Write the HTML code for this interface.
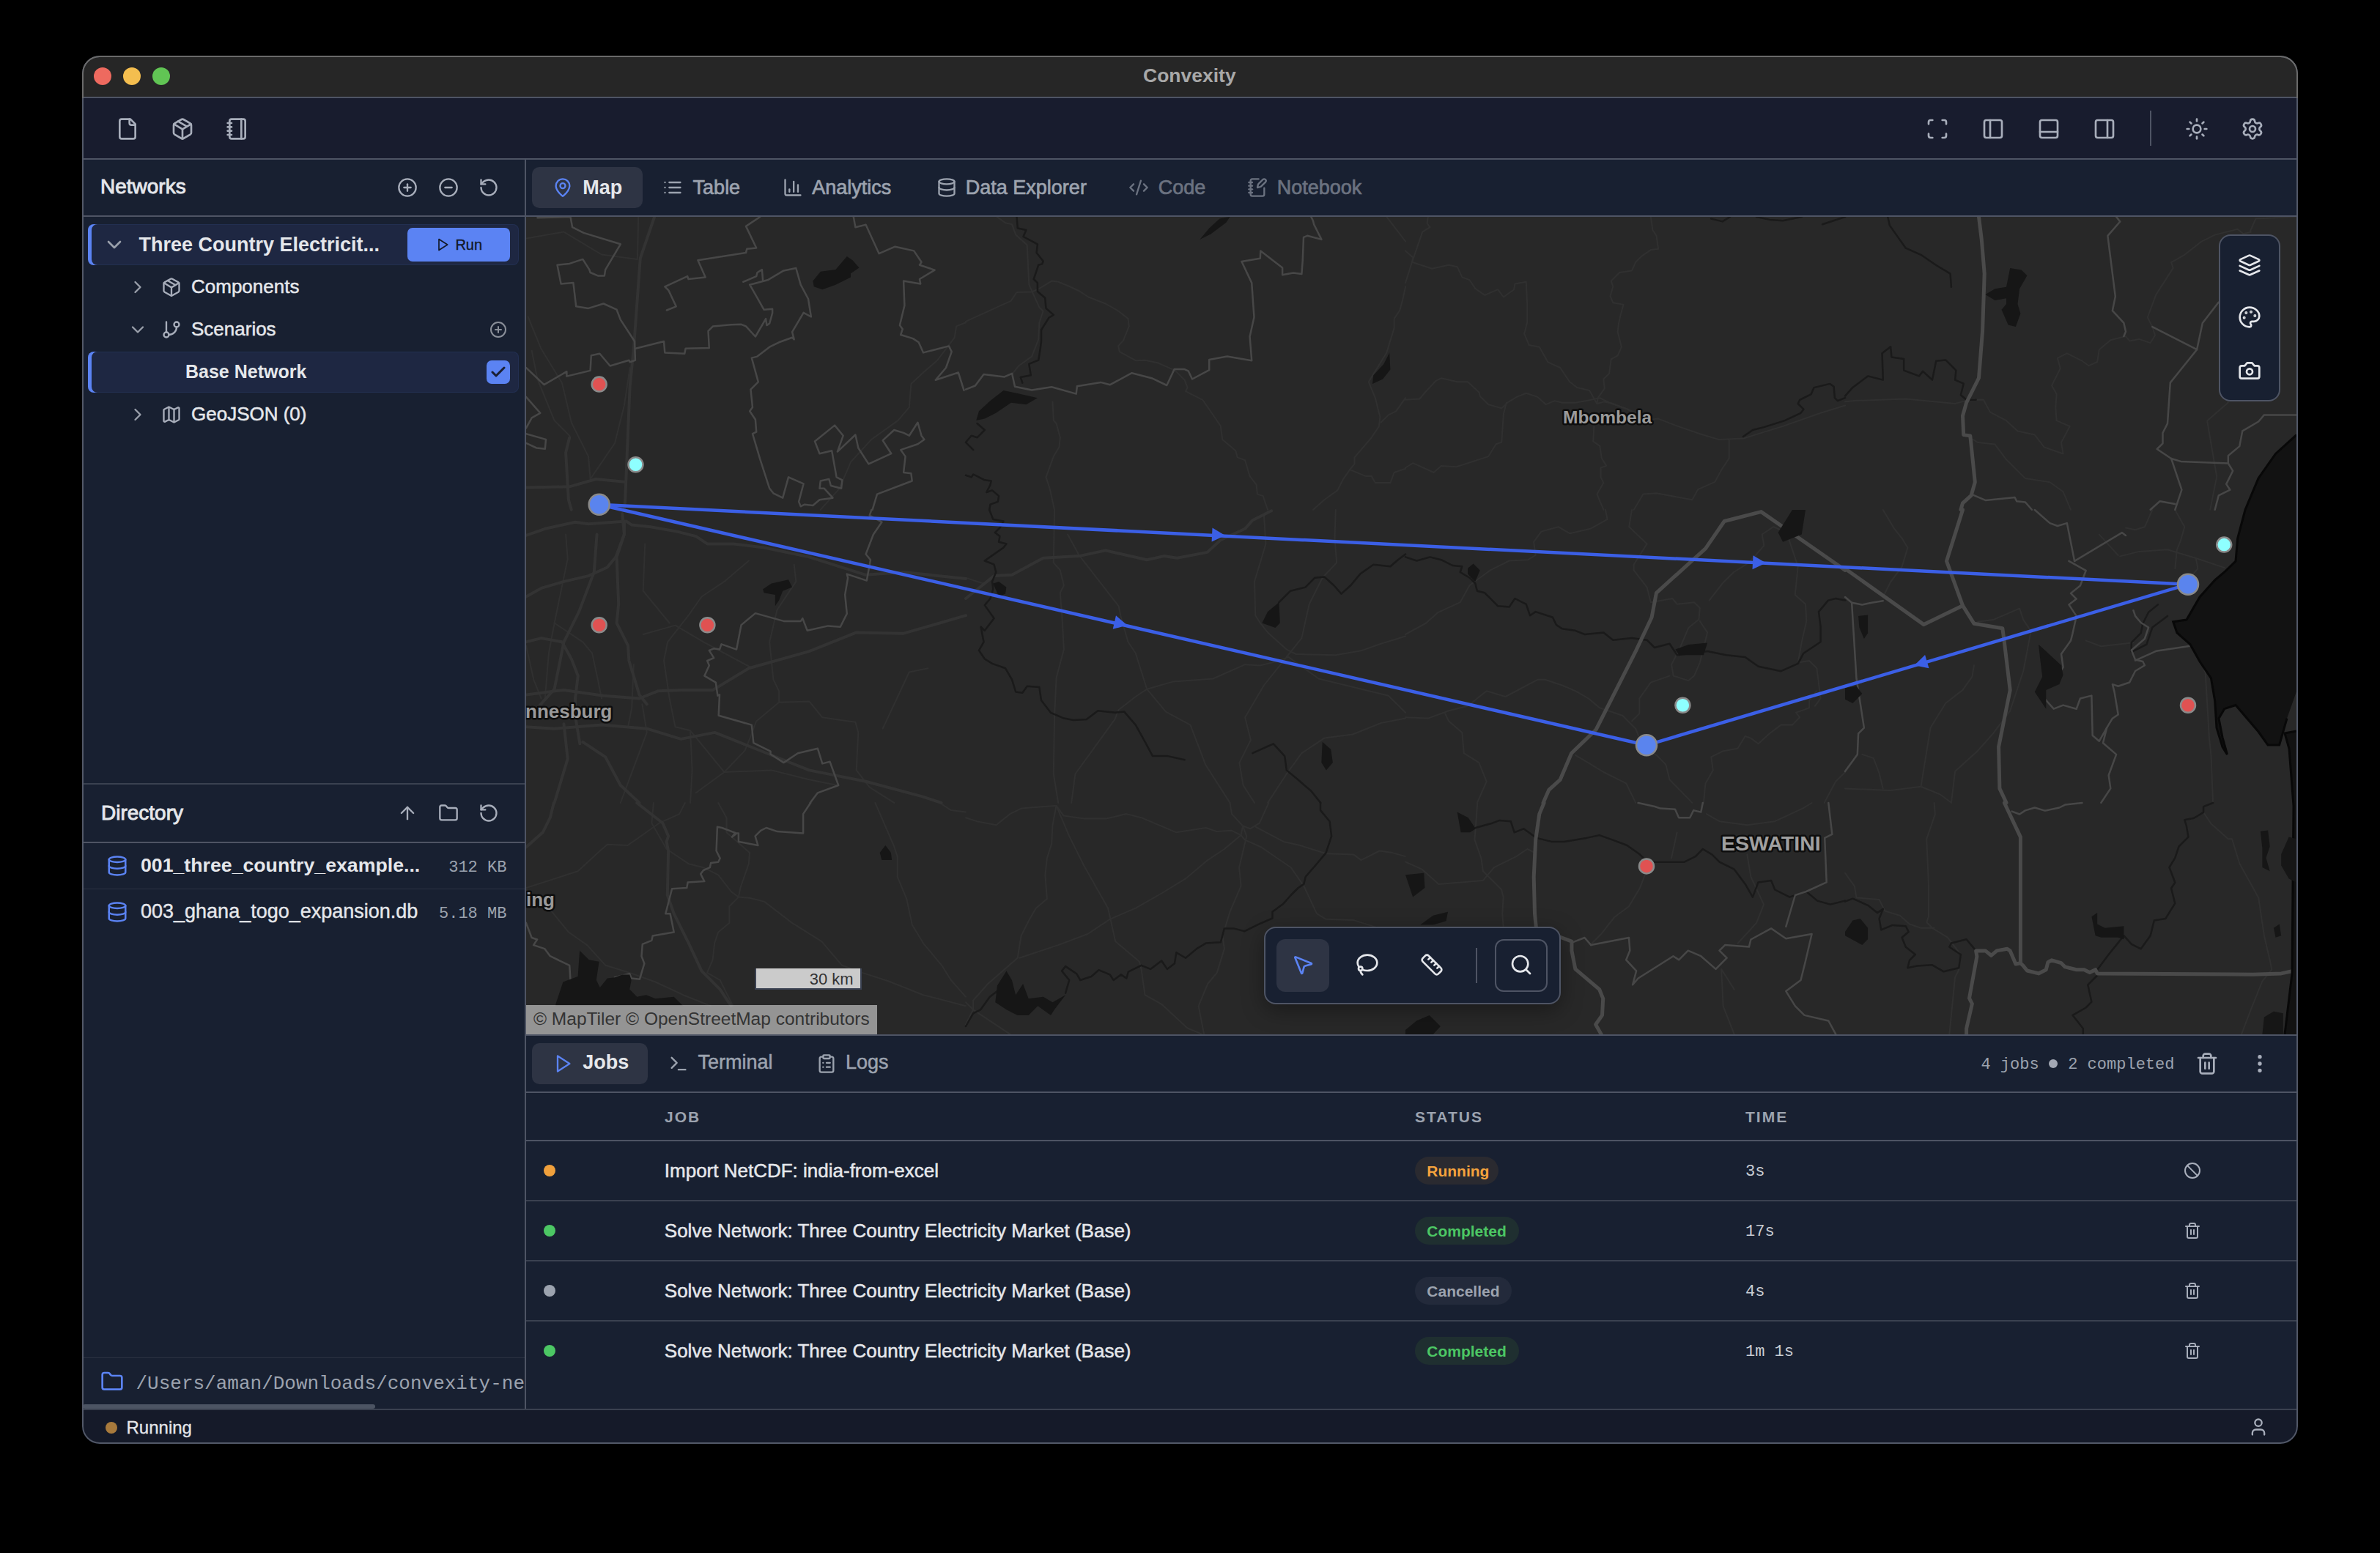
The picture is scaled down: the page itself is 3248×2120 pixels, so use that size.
<!DOCTYPE html>
<html><head><meta charset="utf-8"><style>
html,body{margin:0;padding:0;width:3248px;height:2120px;background:#000;overflow:hidden}
.a{position:absolute}
.t{position:absolute;white-space:pre}
</style></head><body>
<div class="a" style="left:112px;top:76px;width:3024px;height:1895px;border-radius:24px;background:#182031;overflow:hidden">
<div class="a" style="left:-112px;top:-76px;width:3248px;height:2120px">
<div class="a" style="left:112px;top:76px;width:3024px;height:56px;background:#262626;border-radius:0px;"></div>
<div class="a" style="left:112px;top:132px;width:3024px;height:2px;background:#4e5464;border-radius:0px;"></div>
<div class="a" style="left:128px;top:92px;width:24px;height:24px;border-radius:50%;background:#ee6a5f"></div>
<div class="a" style="left:168px;top:92px;width:24px;height:24px;border-radius:50%;background:#f4be4f"></div>
<div class="a" style="left:208px;top:92px;width:24px;height:24px;border-radius:50%;background:#61c554"></div>
<div class="t" style="left:1560.00px;top:90.16px;font-size:26.5px;line-height:26.5px;font-family:'Liberation Sans', sans-serif;font-weight:700;color:#a8a8a8;">Convexity</div>
<div class="a" style="left:112px;top:134px;width:3024px;height:82px;background:#181c2e;border-radius:0px;"></div>
<div class="a" style="left:112px;top:216px;width:3024px;height:2px;background:#4e5464;border-radius:0px;"></div>
<svg class="a" style="left:158.00px;top:160.00px;color:#a8aebb" width="32" height="32" viewBox="0 0 24 24" fill="none" stroke="currentColor" stroke-width="2" stroke-linecap="round" stroke-linejoin="round"><path d="M15 2H6a2 2 0 0 0-2 2v16a2 2 0 0 0 2 2h12a2 2 0 0 0 2-2V7Z"/><path d="M14 2v4a2 2 0 0 0 2 2h4"/></svg>
<svg class="a" style="left:233.00px;top:160.00px;color:#a8aebb" width="32" height="32" viewBox="0 0 24 24" fill="none" stroke="currentColor" stroke-width="2" stroke-linecap="round" stroke-linejoin="round"><path d="M11 21.73a2 2 0 0 0 2 0l7-4A2 2 0 0 0 21 16V8a2 2 0 0 0-1-1.73l-7-4a2 2 0 0 0-2 0l-7 4A2 2 0 0 0 3 8v8a2 2 0 0 0 1 1.73z"/><path d="M12 22V12"/><path d="m3.3 7 7.703 4.734a2 2 0 0 0 1.994 0L20.7 7"/><path d="m7.5 4.27 9 5.15"/></svg>
<svg class="a" style="left:308.00px;top:160.00px;color:#a8aebb" width="32" height="32" viewBox="0 0 24 24" fill="none" stroke="currentColor" stroke-width="2" stroke-linecap="round" stroke-linejoin="round"><path d="M2 6h4"/><path d="M2 10h4"/><path d="M2 14h4"/><path d="M2 18h4"/><rect width="16" height="20" x="4" y="2" rx="2"/><path d="M16 2v20"/></svg>
<svg class="a" style="left:2628.00px;top:160.00px;color:#a8aebb" width="32" height="32" viewBox="0 0 24 24" fill="none" stroke="currentColor" stroke-width="2" stroke-linecap="round" stroke-linejoin="round"><path d="M3 7V5a2 2 0 0 1 2-2h2"/><path d="M17 3h2a2 2 0 0 1 2 2v2"/><path d="M21 17v2a2 2 0 0 1-2 2h-2"/><path d="M7 21H5a2 2 0 0 1-2-2v-2"/></svg>
<svg class="a" style="left:2704.00px;top:160.00px;color:#a8aebb" width="32" height="32" viewBox="0 0 24 24" fill="none" stroke="currentColor" stroke-width="2" stroke-linecap="round" stroke-linejoin="round"><rect width="18" height="18" x="3" y="3" rx="2"/><path d="M9 3v18"/></svg>
<svg class="a" style="left:2780.00px;top:160.00px;color:#a8aebb" width="32" height="32" viewBox="0 0 24 24" fill="none" stroke="currentColor" stroke-width="2" stroke-linecap="round" stroke-linejoin="round"><rect width="18" height="18" x="3" y="3" rx="2"/><path d="M3 15h18"/></svg>
<svg class="a" style="left:2856.00px;top:160.00px;color:#a8aebb" width="32" height="32" viewBox="0 0 24 24" fill="none" stroke="currentColor" stroke-width="2" stroke-linecap="round" stroke-linejoin="round"><rect width="18" height="18" x="3" y="3" rx="2"/><path d="M15 3v18"/></svg>
<svg class="a" style="left:2981.50px;top:160.00px;color:#a8aebb" width="32" height="32" viewBox="0 0 24 24" fill="none" stroke="currentColor" stroke-width="2" stroke-linecap="round" stroke-linejoin="round"><circle cx="12" cy="12" r="4"/><path d="M12 2v2"/><path d="M12 20v2"/><path d="m4.93 4.93 1.41 1.41"/><path d="m17.66 17.66 1.41 1.41"/><path d="M2 12h2"/><path d="M20 12h2"/><path d="m6.34 17.66-1.41 1.41"/><path d="m19.07 4.93-1.41 1.41"/></svg>
<svg class="a" style="left:3058.00px;top:160.00px;color:#a8aebb" width="32" height="32" viewBox="0 0 24 24" fill="none" stroke="currentColor" stroke-width="2" stroke-linecap="round" stroke-linejoin="round"><path d="M9.671 4.136a2.34 2.34 0 0 1 4.659 0 2.34 2.34 0 0 0 3.319 1.915 2.34 2.34 0 0 1 2.33 4.033 2.34 2.34 0 0 0 0 3.831 2.34 2.34 0 0 1-2.33 4.033 2.34 2.34 0 0 0-3.319 1.915 2.34 2.34 0 0 1-4.659 0 2.34 2.34 0 0 0-3.32-1.915 2.34 2.34 0 0 1-2.33-4.033 2.34 2.34 0 0 0 0-3.831A2.34 2.34 0 0 1 6.35 6.051a2.34 2.34 0 0 0 3.319-1.915"/><circle cx="12" cy="12" r="3"/></svg>
<div class="a" style="left:2934px;top:151px;width:2px;height:48px;background:#4e5464;border-radius:0px;"></div>
<div class="a" style="left:112px;top:218px;width:604px;height:1706px;background:#182031;border-radius:0px;"></div>
<div class="a" style="left:716px;top:218px;width:2px;height:1706px;background:#4e5464;border-radius:0px;"></div>
<div class="t" style="left:137.00px;top:241.49px;font-size:28px;line-height:28px;font-family:'Liberation Sans', sans-serif;font-weight:400;color:#e5e7eb;-webkit-text-stroke:0.9px #e5e7eb;">Networks</div>
<div class="a" style="left:112px;top:294px;width:604px;height:2px;background:#4e5464;border-radius:0px;"></div>
<svg class="a" style="left:542.00px;top:242.00px;color:#a8aebb" width="28" height="28" viewBox="0 0 24 24" fill="none" stroke="currentColor" stroke-width="2" stroke-linecap="round" stroke-linejoin="round"><circle cx="12" cy="12" r="10"/><path d="M8 12h8"/><path d="M12 8v8"/></svg>
<svg class="a" style="left:597.70px;top:242.00px;color:#a8aebb" width="28" height="28" viewBox="0 0 24 24" fill="none" stroke="currentColor" stroke-width="2" stroke-linecap="round" stroke-linejoin="round"><circle cx="12" cy="12" r="10"/><path d="M8 12h8"/></svg>
<svg class="a" style="left:653.40px;top:242.00px;color:#a8aebb" width="28" height="28" viewBox="0 0 24 24" fill="none" stroke="currentColor" stroke-width="2" stroke-linecap="round" stroke-linejoin="round"><path d="M3 12a9 9 0 1 0 9-9 9.75 9.75 0 0 0-6.74 2.74L3 8"/><path d="M3 3v5h5"/></svg>
<div class="a" style="left:120px;top:306px;width:588px;height:56px;background:#1e2742;border-radius:8px;box-shadow:inset 5px 0 0 #5b83f3, inset 0 0 0 1px #222f50"></div>
<svg class="a" style="left:140.00px;top:318.00px;color:#9aa0ab" width="32" height="32" viewBox="0 0 24 24" fill="none" stroke="currentColor" stroke-width="2" stroke-linecap="round" stroke-linejoin="round"><path d="m6 9 6 6 6-6"/></svg>
<div class="t" style="left:189.40px;top:321.14px;font-size:27px;line-height:27px;font-family:'Liberation Sans', sans-serif;font-weight:700;color:#e5e7eb;">Three Country Electricit...</div>
<div class="a" style="left:556px;top:311px;width:140px;height:46px;background:#5b83f3;border-radius:7px;"></div>
<svg class="a" style="left:593.90px;top:324.00px;color:#111827" width="20" height="20" viewBox="0 0 24 24" fill="none" stroke="currentColor" stroke-width="2" stroke-linecap="round" stroke-linejoin="round"><polygon points="6 3 20 12 6 21 6 3"/></svg>
<div class="t" style="left:621.40px;top:324.27px;font-size:20px;line-height:20px;font-family:'Liberation Sans', sans-serif;font-weight:400;color:#111827;-webkit-text-stroke:0.3px #111827;">Run</div>
<svg class="a" style="left:174.00px;top:378.00px;color:#9aa0ab" width="28" height="28" viewBox="0 0 24 24" fill="none" stroke="currentColor" stroke-width="2" stroke-linecap="round" stroke-linejoin="round"><path d="m9 18 6-6-6-6"/></svg>
<svg class="a" style="left:220.00px;top:378.00px;color:#a8aebb" width="28" height="28" viewBox="0 0 24 24" fill="none" stroke="currentColor" stroke-width="2" stroke-linecap="round" stroke-linejoin="round"><path d="M11 21.73a2 2 0 0 0 2 0l7-4A2 2 0 0 0 21 16V8a2 2 0 0 0-1-1.73l-7-4a2 2 0 0 0-2 0l-7 4A2 2 0 0 0 3 8v8a2 2 0 0 0 1 1.73z"/><path d="M12 22V12"/><path d="m3.3 7 7.703 4.734a2 2 0 0 0 1.994 0L20.7 7"/><path d="m7.5 4.27 9 5.15"/></svg>
<div class="t" style="left:261.00px;top:378.49px;font-size:26px;line-height:26px;font-family:'Liberation Sans', sans-serif;font-weight:400;color:#e5e7eb;-webkit-text-stroke:0.5px #e5e7eb;">Components</div>
<svg class="a" style="left:173.60px;top:436.40px;color:#9aa0ab" width="28" height="28" viewBox="0 0 24 24" fill="none" stroke="currentColor" stroke-width="2" stroke-linecap="round" stroke-linejoin="round"><path d="m6 9 6 6 6-6"/></svg>
<svg class="a" style="left:220.00px;top:436.00px;color:#a8aebb" width="28" height="28" viewBox="0 0 24 24" fill="none" stroke="currentColor" stroke-width="2" stroke-linecap="round" stroke-linejoin="round"><line x1="6" x2="6" y1="3" y2="15"/><circle cx="18" cy="6" r="3"/><circle cx="6" cy="18" r="3"/><path d="M18 9a9 9 0 0 1-9 9"/></svg>
<div class="t" style="left:261.00px;top:436.19px;font-size:26px;line-height:26px;font-family:'Liberation Sans', sans-serif;font-weight:400;color:#e5e7eb;-webkit-text-stroke:0.5px #e5e7eb;">Scenarios</div>
<svg class="a" style="left:668.00px;top:438.00px;color:#8a8f99" width="24" height="24" viewBox="0 0 24 24" fill="none" stroke="currentColor" stroke-width="2" stroke-linecap="round" stroke-linejoin="round"><circle cx="12" cy="12" r="10"/><path d="M8 12h8"/><path d="M12 8v8"/></svg>
<div class="a" style="left:120px;top:480px;width:588px;height:56px;background:#1e2742;border-radius:8px;box-shadow:inset 5px 0 0 #5b83f3, inset 0 0 0 1px #222f50"></div>
<div class="t" style="left:253.00px;top:495.23px;font-size:25px;line-height:25px;font-family:'Liberation Sans', sans-serif;font-weight:700;color:#e5e7eb;">Base Network</div>
<div class="a" style="left:664px;top:492px;width:32px;height:32px;background:#5b83f3;border-radius:7px;"></div>
<svg class="a" style="left:668.00px;top:496.00px;color:#1a1f33" width="24" height="24" viewBox="0 0 24 24" fill="none" stroke="currentColor" stroke-width="3" stroke-linecap="round" stroke-linejoin="round"><path d="M20 6 9 17l-5-5"/></svg>
<svg class="a" style="left:174.00px;top:552.30px;color:#9aa0ab" width="28" height="28" viewBox="0 0 24 24" fill="none" stroke="currentColor" stroke-width="2" stroke-linecap="round" stroke-linejoin="round"><path d="m9 18 6-6-6-6"/></svg>
<svg class="a" style="left:220.00px;top:552.00px;color:#a8aebb" width="28" height="28" viewBox="0 0 24 24" fill="none" stroke="currentColor" stroke-width="2" stroke-linecap="round" stroke-linejoin="round"><path d="M14.106 5.553a2 2 0 0 0 1.788 0l3.659-1.83A1 1 0 0 1 21 4.619v12.764a1 1 0 0 1-.553.894l-4.553 2.277a2 2 0 0 1-1.788 0l-4.212-2.106a2 2 0 0 0-1.788 0l-3.659 1.83A1 1 0 0 1 3 19.381V6.618a1 1 0 0 1 .553-.894l4.553-2.277a2 2 0 0 1 1.788 0z"/><path d="M15 5.764v15"/><path d="M9 3.236v15"/></svg>
<div class="t" style="left:261.00px;top:552.49px;font-size:26px;line-height:26px;font-family:'Liberation Sans', sans-serif;font-weight:400;color:#e5e7eb;-webkit-text-stroke:0.5px #e5e7eb;">GeoJSON (0)</div>
<div class="a" style="left:112px;top:1069px;width:604px;height:2px;background:#3a4150;border-radius:0px;"></div>
<div class="t" style="left:138.00px;top:1096.09px;font-size:28px;line-height:28px;font-family:'Liberation Sans', sans-serif;font-weight:400;color:#e5e7eb;-webkit-text-stroke:0.9px #e5e7eb;">Directory</div>
<svg class="a" style="left:542.00px;top:1096.00px;color:#a8aebb" width="28" height="28" viewBox="0 0 24 24" fill="none" stroke="currentColor" stroke-width="2" stroke-linecap="round" stroke-linejoin="round"><path d="m5 12 7-7 7 7"/><path d="M12 19V5"/></svg>
<svg class="a" style="left:597.70px;top:1096.00px;color:#a8aebb" width="28" height="28" viewBox="0 0 24 24" fill="none" stroke="currentColor" stroke-width="2" stroke-linecap="round" stroke-linejoin="round"><path d="M20 20a2 2 0 0 0 2-2V8a2 2 0 0 0-2-2h-7.9a2 2 0 0 1-1.69-.9L9.6 3.9A2 2 0 0 0 7.93 3H4a2 2 0 0 0-2 2v13a2 2 0 0 0 2 2Z"/></svg>
<svg class="a" style="left:653.00px;top:1096.00px;color:#a8aebb" width="28" height="28" viewBox="0 0 24 24" fill="none" stroke="currentColor" stroke-width="2" stroke-linecap="round" stroke-linejoin="round"><path d="M3 12a9 9 0 1 0 9-9 9.75 9.75 0 0 0-6.74 2.74L3 8"/><path d="M3 3v5h5"/></svg>
<div class="a" style="left:112px;top:1149px;width:604px;height:2px;background:#4e5464;border-radius:0px;"></div>
<svg class="a" style="left:145.00px;top:1167.00px;color:#5b83f3" width="30" height="30" viewBox="0 0 24 24" fill="none" stroke="currentColor" stroke-width="2" stroke-linecap="round" stroke-linejoin="round"><ellipse cx="12" cy="5" rx="9" ry="3"/><path d="M3 5V19A9 3 0 0 0 21 19V5"/><path d="M3 12A9 3 0 0 0 21 12"/></svg>
<div class="t" style="left:192.00px;top:1168.09px;font-size:26.7px;line-height:26.7px;font-family:'Liberation Sans', sans-serif;font-weight:700;color:#e5e7eb;">001_three_country_example...</div>
<div class="t" style="right:2556.60px;top:1173.85px;font-size:22px;line-height:22px;font-family:'Liberation Mono', monospace;font-weight:400;color:#9ca3af;">312 KB</div>
<div class="a" style="left:112px;top:1213px;width:604px;height:1px;background:#2b3242;border-radius:0px;"></div>
<svg class="a" style="left:145.00px;top:1230.40px;color:#5b83f3" width="30" height="30" viewBox="0 0 24 24" fill="none" stroke="currentColor" stroke-width="2" stroke-linecap="round" stroke-linejoin="round"><ellipse cx="12" cy="5" rx="9" ry="3"/><path d="M3 5V19A9 3 0 0 0 21 19V5"/><path d="M3 12A9 3 0 0 0 21 12"/></svg>
<div class="t" style="left:192.00px;top:1230.84px;font-size:27px;line-height:27px;font-family:'Liberation Sans', sans-serif;font-weight:400;color:#e5e7eb;-webkit-text-stroke:0.4px #e5e7eb;">003_ghana_togo_expansion.db</div>
<div class="t" style="right:2556.60px;top:1236.85px;font-size:22px;line-height:22px;font-family:'Liberation Mono', monospace;font-weight:400;color:#9ca3af;">5.18 MB</div>
<div class="a" style="left:112px;top:1853px;width:604px;height:1px;background:#2b3242;border-radius:0px;"></div>
<svg class="a" style="left:137.00px;top:1870.00px;color:#5b83f3" width="32" height="32" viewBox="0 0 24 24" fill="none" stroke="currentColor" stroke-width="2" stroke-linecap="round" stroke-linejoin="round"><path d="M20 20a2 2 0 0 0 2-2V8a2 2 0 0 0-2-2h-7.9a2 2 0 0 1-1.69-.9L9.6 3.9A2 2 0 0 0 7.93 3H4a2 2 0 0 0-2 2v13a2 2 0 0 0 2 2Z"/></svg>
<div class="a" style="left:112px;top:1854px;width:604px;height:63px;overflow:hidden">
<div class="t" style="left:73.50px;top:21.58px;font-size:26px;line-height:26px;font-family:'Liberation Mono', monospace;font-weight:400;color:#9ca3af;">/Users/aman/Downloads/convexity-networks</div>
</div>
<div class="a" style="left:113px;top:1917px;width:399px;height:6px;background:#4c5463;border-radius:3px;"></div>
<div class="a" style="left:112px;top:1923px;width:3024px;height:2px;background:#3a4150;border-radius:0px;"></div>
<div class="a" style="left:112px;top:1925px;width:3024px;height:46px;background:#151a29;border-radius:0px;"></div>
<div class="a" style="left:143.7px;top:1941px;width:16px;height:16px;border-radius:50%;background:#a87a3c"></div>
<div class="t" style="left:172.50px;top:1936.68px;font-size:24px;line-height:24px;font-family:'Liberation Sans', sans-serif;font-weight:400;color:#e5e7eb;-webkit-text-stroke:0.3px #e5e7eb;">Running</div>
<svg class="a" style="left:3068.00px;top:1934.00px;color:#a8aebb" width="28" height="28" viewBox="0 0 24 24" fill="none" stroke="currentColor" stroke-width="2" stroke-linecap="round" stroke-linejoin="round"><path d="M19 21v-2a4 4 0 0 0-4-4H9a4 4 0 0 0-4 4v2"/><circle cx="12" cy="7" r="4"/></svg>
<div class="a" style="left:718px;top:218px;width:2416px;height:76px;background:#182031;border-radius:0px;"></div>
<div class="a" style="left:718px;top:294px;width:2416px;height:2px;background:#4e5464;border-radius:0px;"></div>
<div class="a" style="left:726px;top:228px;width:151px;height:56px;background:#2e3444;border-radius:10px;"></div>
<svg class="a" style="left:754.00px;top:241.50px;color:#5b83f3" width="28" height="28" viewBox="0 0 24 24" fill="none" stroke="currentColor" stroke-width="2" stroke-linecap="round" stroke-linejoin="round"><path d="M20 10c0 4.993-5.539 10.193-7.399 11.799a1 1 0 0 1-1.202 0C9.539 20.193 4 14.993 4 10a8 8 0 0 1 16 0"/><circle cx="12" cy="10" r="3"/></svg>
<div class="t" style="left:795.20px;top:242.54px;font-size:27px;line-height:27px;font-family:'Liberation Sans', sans-serif;font-weight:700;color:#e5e7eb;">Map</div>
<svg class="a" style="left:904.00px;top:241.50px;color:#9ca3af" width="28" height="28" viewBox="0 0 24 24" fill="none" stroke="currentColor" stroke-width="2" stroke-linecap="round" stroke-linejoin="round"><path d="M3 12h.01"/><path d="M3 18h.01"/><path d="M3 6h.01"/><path d="M8 12h13"/><path d="M8 18h13"/><path d="M8 6h13"/></svg>
<div class="t" style="left:945.60px;top:242.54px;font-size:27px;line-height:27px;font-family:'Liberation Sans', sans-serif;font-weight:400;color:#9ca3af;-webkit-text-stroke:0.7px #9ca3af;">Table</div>
<svg class="a" style="left:1068.00px;top:241.50px;color:#9ca3af" width="28" height="28" viewBox="0 0 24 24" fill="none" stroke="currentColor" stroke-width="2" stroke-linecap="round" stroke-linejoin="round"><path d="M3 3v16a2 2 0 0 0 2 2h16"/><path d="M18 17V9"/><path d="M13 17V5"/><path d="M8 17v-3"/></svg>
<div class="t" style="left:1108.20px;top:242.54px;font-size:27px;line-height:27px;font-family:'Liberation Sans', sans-serif;font-weight:400;color:#9ca3af;-webkit-text-stroke:0.7px #9ca3af;">Analytics</div>
<svg class="a" style="left:1278.00px;top:241.50px;color:#9ca3af" width="28" height="28" viewBox="0 0 24 24" fill="none" stroke="currentColor" stroke-width="2" stroke-linecap="round" stroke-linejoin="round"><ellipse cx="12" cy="5" rx="9" ry="3"/><path d="M3 5V19A9 3 0 0 0 21 19V5"/><path d="M3 12A9 3 0 0 0 21 12"/></svg>
<div class="t" style="left:1317.80px;top:242.54px;font-size:27px;line-height:27px;font-family:'Liberation Sans', sans-serif;font-weight:400;color:#9ca3af;-webkit-text-stroke:0.7px #9ca3af;">Data Explorer</div>
<svg class="a" style="left:1540.00px;top:241.50px;color:#6b7280" width="28" height="28" viewBox="0 0 24 24" fill="none" stroke="currentColor" stroke-width="2" stroke-linecap="round" stroke-linejoin="round"><path d="m18 16 4-4-4-4"/><path d="m6 8-4 4 4 4"/><path d="m14.5 4-5 16"/></svg>
<div class="t" style="left:1580.80px;top:242.54px;font-size:27px;line-height:27px;font-family:'Liberation Sans', sans-serif;font-weight:400;color:#6b7280;-webkit-text-stroke:0.7px #6b7280;">Code</div>
<svg class="a" style="left:1702.00px;top:241.50px;color:#6b7280" width="28" height="28" viewBox="0 0 24 24" fill="none" stroke="currentColor" stroke-width="2" stroke-linecap="round" stroke-linejoin="round"><path d="M13.4 2H6a2 2 0 0 0-2 2v16a2 2 0 0 0 2 2h12a2 2 0 0 0 2-2v-7.4"/><path d="M2 6h4"/><path d="M2 10h4"/><path d="M2 14h4"/><path d="M2 18h4"/><path d="M21.378 5.626a1 1 0 1 0-3.004-3.004l-5.01 5.012a2 2 0 0 0-.506.854l-.837 2.87a.5.5 0 0 0 .62.62l2.87-.837a2 2 0 0 0 .854-.506z"/></svg>
<div class="t" style="left:1742.70px;top:242.54px;font-size:27px;line-height:27px;font-family:'Liberation Sans', sans-serif;font-weight:400;color:#6b7280;-webkit-text-stroke:0.7px #6b7280;">Notebook</div>
<svg class="a" style="left:718px;top:296px" width="2416" height="1116" viewBox="718 296 2416 1116">
<rect x="718" y="296" width="2416" height="1116" fill="#282828"/>
<g fill="none" stroke-linejoin="round" stroke-linecap="round">
<polyline points="871.2,296.0 869.9,352.7" stroke="#303030" stroke-width="2"/>
<polyline points="718.0,325.6 769.5,316.6 821.0,347.5 869.9,353.9" stroke="#303030" stroke-width="2"/>
<polyline points="1318.1,440.2 1305.2,445.4 1302.6,460.8 1279.4,491.7 1261.4,507.2 1243.4,523.9 1240.8,556.1 1225.3,574.1 1189.3,599.9 1161.0,630.8 1145.5,666.8 1119.8,695.9" stroke="#303030" stroke-width="2"/>
<polyline points="720.6,432.5 738.6,476.3 766.9,522.6 779.8,576.7 803.0,623.1 805.6,654.0" stroke="#303030" stroke-width="2"/>
<polyline points="725.7,478.8 733.5,517.5 756.6,574.1 777.2,594.7" stroke="#303030" stroke-width="2"/>
<polyline points="805.6,654.0 839.0,605.0 851.9,553.5 859.6,502.0" stroke="#303030" stroke-width="2"/>
<polyline points="1360.5,296.0 1372.1,304.2 1381.1,306.3 1386.2,320.5 1401.7,334.6 1404.3,388.7 1418.4,419.6 1423.6,424.8 1418.4,440.2 1417.2,463.4 1408.1,486.6 1390.1,499.5 1381.1,511.0" stroke="#303030" stroke-width="2"/>
<polyline points="1318.0,438.9 1379.8,410.6 1387.5,399.0 1408.1,398.5 1418.4,393.9 1435.2,383.6 1444.2,384.8 1457.1,390.0 1472.5,397.0 1485.4,405.5 1508.6,414.5 1526.6,424.8 1539.5,435.1 1540.8,445.4 1533.0,464.7 1526.1,472.4 1527.9,480.1 1549.8,492.2 1562.7,491.7 1580.7,495.6 1603.9,505.9 1616.7,518.8 1620.6,529.1 1618.0,534.2 1641.2,545.8 1665.7,581.3 1668.2,599.9 1686.3,615.3 1688.8,624.4 1699.1,628.2 1705.6,650.1 1714.6,661.7 1715.9,674.6 1723.6,677.1 1730.1,695.9" stroke="#303030" stroke-width="2"/>
<polyline points="1436.5,548.4 1437.8,574.1 1441.6,578.0 1446.8,597.3 1445.5,610.2 1437.8,623.1 1427.5,651.4 1432.6,666.8 1439.0,695.9" stroke="#303030" stroke-width="2"/>
<polyline points="1892.3,296.0 1918.1,329.5" stroke="#303030" stroke-width="2"/>
<polyline points="1918.1,391.3 1914.2,409.3 1910.3,423.5 1902.6,435.1 1902.6,447.9 1892.3,481.4 1867.8,521.3 1876.8,543.2 1883.3,569.0 1882.0,581.9 1871.7,597.3 1848.5,624.4 1848.5,633.4 1842.1,641.1 1833.1,654.0 1825.3,669.4 1807.3,682.3 1791.9,695.9" stroke="#303030" stroke-width="2"/>
<polyline points="1842.1,641.1 1864.0,650.1 1871.7,650.1 1876.8,659.1 1897.4,659.1 1902.6,645.0 1918.1,639.8" stroke="#303030" stroke-width="2"/>
<polyline points="1884.6,576.7 1894.9,566.4 1905.2,561.3 1918.1,543.2" stroke="#303030" stroke-width="2"/>
<polyline points="1918.0,342.4 1928.3,351.4 1927.0,357.8 1954.1,366.8 1977.2,361.7 1988.8,364.2 1995.3,378.4 2005.6,382.3 2013.3,393.9 2026.2,402.9 2044.2,395.2 2051.9,405.5 2066.1,395.2 2067.4,387.4 2082.8,384.8 2084.1,414.5 2084.1,440.2 2080.2,455.7 2086.7,471.1 2100.8,473.7 2112.4,494.3 2129.2,502.0 2142.1,521.3 2152.4,529.1 2169.1,532.9 2179.4,551.0 2189.7,548.4 2201.3,551.0 2227.0,561.3 2252.8,572.8 2263.1,571.6 2286.3,580.6 2319.8,592.2 2345.5,599.9 2379.0,598.6 2433.1,581.9 2484.6,563.8 2518.1,553.5" stroke="#303030" stroke-width="2"/>
<polyline points="1948.9,296.0 1947.6,305.0 1951.5,310.2 1941.2,316.6 1927.0,357.8 1918.0,386.1" stroke="#303030" stroke-width="2"/>
<polyline points="2252.8,296.0 2255.4,314.0 2260.5,321.8 2263.1,339.8 2252.8,341.1 2239.9,350.1 2232.2,357.8 2227.0,369.4 2210.3,372.0 2198.7,383.6 2201.3,391.3 2197.4,404.2 2201.3,413.2 2215.5,415.8 2211.6,429.9 2209.0,441.5 2207.7,453.1 2212.9,473.7 2207.7,485.3 2198.7,490.4 2196.1,509.8 2188.4,517.5 2189.7,530.4 2180.7,543.2 2179.4,551.0" stroke="#303030" stroke-width="2"/>
<polyline points="1918.0,545.8 1937.3,544.5 1943.8,536.8 1959.2,520.1 1966.9,516.2 1988.8,521.3 2003.0,521.3 2018.4,535.5 2019.7,540.7 2031.3,552.2 2049.3,557.4 2054.5,552.2 2057.1,549.7 2069.9,541.9 2082.8,536.8 2098.3,541.9 2109.9,552.2 2121.5,547.1 2131.8,549.7 2149.8,549.7 2165.2,547.1 2183.3,543.2 2196.1,549.7 2221.9,558.7 2227.0,562.5" stroke="#303030" stroke-width="2"/>
<polyline points="2055.8,549.7 2051.9,565.1 2049.3,603.8 2041.6,606.3 2031.3,623.1 1987.5,637.2 1966.9,635.9 1956.6,645.0 1928.3,632.1 1918.0,638.5" stroke="#303030" stroke-width="2"/>
<polyline points="2175.5,579.3 2174.2,602.5 2183.3,608.9 2185.8,625.6 2192.3,635.9 2184.5,638.5 2184.5,651.4 2188.4,659.1 2179.4,674.6 2188.4,695.9" stroke="#303030" stroke-width="2"/>
<polyline points="2359.7,599.9 2359.7,625.6 2349.4,641.1 2340.4,657.8 2317.2,668.1 2309.4,682.3 2260.5,673.3 2242.5,674.6 2229.6,695.9" stroke="#303030" stroke-width="2"/>
<polyline points="2518.0,548.3 2530.9,547.0 2600.8,544.4 2668.1,550.9 2694.0,544.4" stroke="#303030" stroke-width="2"/>
<polyline points="2696.6,545.7 2706.9,545.7 2716.0,562.6 2738.0,574.2 2753.5,588.4 2776.8,593.6 2789.7,610.4 2815.6,619.5 2813.0,604.0 2824.7,582.0 2806.6,574.2 2805.3,556.1 2806.6,538.0 2800.1,526.3 2811.7,503.0 2807.9,488.8 2820.8,482.3 2841.5,492.7 2850.6,499.2 2862.2,494.0 2864.8,477.2 2880.3,464.2 2901.0,459.0 2906.2,465.5 2919.1,462.9 2934.7,468.1 2941.1,457.7 2937.3,446.1 2930.8,433.2 2942.4,402.1 2965.7,365.9 2963.1,358.1 2981.3,347.8 3004.5,329.6 3022.7,320.6 3053.7,312.8 3061.5,319.3 3071.8,316.7" stroke="#303030" stroke-width="2"/>
<polyline points="3070.5,316.7 3078.3,298.6 3133.9,296.0" stroke="#303030" stroke-width="2"/>
<polyline points="3012.3,575.5 3025.2,650.6 3016.2,695.8" stroke="#303030" stroke-width="2"/>
<polyline points="3012.3,574.2 3040.8,549.6" stroke="#303030" stroke-width="2"/>
<polyline points="2686.2,596.2 2699.2,604.0 2722.5,606.6 2738.0,627.3 2763.9,653.1 2797.5,658.3 2815.6,671.3 2826.0,695.8" stroke="#303030" stroke-width="2"/>
<polyline points="1083.7,770.7 1086.3,793.9 1060.5,832.5 1050.2,876.3 1055.4,927.8 1063.1,943.2 1063.1,958.7 1032.2,984.4 1024.5,1005.0 1016.7,1024.4 988.4,1054.0 949.8,1082.3" stroke="#303030" stroke-width="2"/>
<polyline points="1266.5,912.3 1240.8,917.5 1204.7,994.7" stroke="#303030" stroke-width="2"/>
<polyline points="718.0,881.4 728.3,927.8 738.6,953.5" stroke="#303030" stroke-width="2"/>
<polyline points="1021.9,765.5 988.4,793.9 957.5,814.5 939.5,840.2 911.1,876.3 906.0,902.0 913.7,953.5 921.5,992.2 942.1,997.3 944.6,1051.4 942.1,1095.9" stroke="#303030" stroke-width="2"/>
<polyline points="846.8,1095.9 882.8,999.9 876.4,961.3" stroke="#303030" stroke-width="2"/>
<polyline points="1063.1,958.7 1104.3,957.4 1122.3,979.3 1140.4,981.9 1167.4,985.7 1171.3,999.9 1168.7,1051.4 1186.7,1074.6 1220.2,1095.9" stroke="#303030" stroke-width="2"/>
<polyline points="877.7,866.0 921.5,853.6 960.1,876.3 1024.5,911.0" stroke="#303030" stroke-width="2"/>
<polyline points="942.1,997.3 988.4,1054.0 1052.8,1051.4 1104.3,1064.3 1142.9,1072.0" stroke="#303030" stroke-width="2"/>
<polyline points="756.6,850.5 795.3,876.3 808.1,891.7 815.9,927.8 821.0,953.5" stroke="#303030" stroke-width="2"/>
<polyline points="772.1,729.5 774.7,763.0 756.6,850.5 748.9,891.7 743.8,953.5" stroke="#303030" stroke-width="2"/>
<polyline points="880.2,742.4 877.7,806.7 913.7,850.5" stroke="#303030" stroke-width="2"/>
<polyline points="864.8,907.2 862.2,966.4 857.1,992.2" stroke="#303030" stroke-width="2"/>
<polyline points="1439.0,696.0 1437.8,768.1 1446.8,778.4 1451.9,799.0 1446.8,809.3 1449.3,840.2 1451.9,886.6 1441.6,925.2 1439.0,979.3 1437.8,1056.5 1444.2,1095.9" stroke="#303030" stroke-width="2"/>
<polyline points="1457.1,729.5 1472.5,757.8 1526.6,827.3 1529.2,840.2 1539.5,876.3 1549.8,891.7 1565.2,940.7 1591.0,971.6 1624.5,989.6 1645.1,1043.7 1678.5,1095.9" stroke="#303030" stroke-width="2"/>
<polyline points="1318.0,788.7 1341.2,796.4 1356.6,788.7" stroke="#303030" stroke-width="2"/>
<polyline points="1462.2,1095.9 1467.4,1056.5 1521.5,981.9 1526.6,969.0 1549.8,951.0 1565.2,940.7 1601.3,930.4 1655.4,926.5 1699.1,907.2 1719.8,908.5 1745.5,902.0 1758.4,896.9 1799.6,926.5 1894.9,949.7 1918.1,972.8" stroke="#303030" stroke-width="2"/>
<polyline points="1724.9,703.7 1727.5,742.4 1712.0,793.9 1713.3,840.2 1719.8,850.5 1730.1,863.4 1755.8,886.6 1768.7,893.0 1822.8,894.3 1858.8,887.9 1884.6,878.8 1918.1,868.5" stroke="#303030" stroke-width="2"/>
<polyline points="1822.8,696.0 1821.5,734.6 1824.1,768.1 1804.7,788.7 1786.7,824.8 1776.4,871.1 1755.8,896.9 1724.9,935.5 1699.1,979.3 1706.9,1010.2 1691.4,1041.1 1696.6,1072.0 1712.0,1095.9" stroke="#303030" stroke-width="2"/>
<polyline points="1730.1,1095.9 1755.8,1056.5 1776.4,1028.2 1807.3,1007.6 1845.9,1002.5 1884.6,987.0 1918.1,980.6" stroke="#303030" stroke-width="2"/>
<polyline points="2191.0,696.0 2193.6,708.9 2170.4,721.8 2142.1,728.2 2126.6,719.2 2103.4,725.6 2093.1,739.8 2095.7,757.8 2085.4,764.2 2059.6,765.5 2033.9,778.4 2005.6,799.0 1992.7,822.2 1961.8,836.4 1946.3,850.5 1918.0,866.0" stroke="#303030" stroke-width="2"/>
<polyline points="2227.0,696.0 2223.2,719.2 2247.6,742.4 2229.6,770.7 2229.6,778.4 2247.6,801.6 2252.8,822.2 2282.4,817.0 2288.8,824.8 2312.0,822.2 2319.8,829.9 2318.5,845.4 2304.3,857.0 2294.0,881.4 2281.1,907.2 2283.7,922.6 2304.3,929.1 2312.0,922.6 2319.8,904.6 2330.1,863.4 2319.8,847.9" stroke="#303030" stroke-width="2"/>
<polyline points="2332.6,819.6 2350.7,796.4 2366.1,781.0 2386.7,768.1 2407.3,744.9 2404.7,729.5 2420.2,719.2 2438.2,726.9 2453.7,773.3 2449.8,811.9 2464.0,824.8 2465.3,847.9 2458.8,876.3 2453.7,904.6 2469.1,902.0 2479.4,912.3 2484.6,953.5 2476.8,963.8" stroke="#303030" stroke-width="2"/>
<polyline points="1918.0,979.3 1948.9,980.6 1977.2,970.3 2003.0,963.8 2028.7,943.2 2054.5,951.0 2098.3,927.8 2108.6,927.8 2131.8,935.5 2149.8,943.2 2167.8,953.5 2183.3,966.4 2214.2,976.7 2232.2,994.7 2242.5,1020.5 2260.5,1030.8 2273.4,1043.7 2278.5,1064.3 2309.4,1095.9" stroke="#303030" stroke-width="2"/>
<polyline points="2227.0,984.4 2237.3,974.1 2237.3,953.5 2252.8,931.6 2278.5,922.6" stroke="#303030" stroke-width="2"/>
<polyline points="2149.8,1030.8 2165.2,1039.8 2188.4,1054.0 2219.3,1069.4 2232.2,1095.9" stroke="#303030" stroke-width="2"/>
<polyline points="2479.4,943.2 2469.1,956.1 2469.1,966.4 2451.1,972.8 2456.2,979.3 2445.9,989.6 2430.5,989.6 2415.0,1001.2 2399.6,1015.3 2389.3,1007.6 2381.6,1005.0 2371.3,1021.8 2350.7,1025.6 2335.2,1033.4 2337.8,1051.4 2327.5,1069.4 2324.9,1095.9" stroke="#303030" stroke-width="2"/>
<polyline points="1972.1,974.1 1977.2,984.4 1995.3,999.9 1997.8,1028.2 2018.4,1041.1 2028.7,1066.8 2015.9,1095.9" stroke="#303030" stroke-width="2"/>
<polyline points="2518.1,1054.0 2505.2,1066.8 2489.7,1095.9" stroke="#303030" stroke-width="2"/>
<polyline points="2901.0,720.6 2914.0,723.2 2926.9,719.3 2937.3,696.0" stroke="#303030" stroke-width="2"/>
<polyline points="2968.3,696.0 2981.3,719.3 2976.1,737.4 2970.9,750.3 2968.3,776.2" stroke="#303030" stroke-width="2"/>
<polyline points="2893.3,759.4 2919.1,752.9 2958.0,750.3 2996.8,762.0 3035.6,774.9" stroke="#303030" stroke-width="2"/>
<polyline points="2996.8,762.0 2999.4,776.2 2991.6,785.3" stroke="#303030" stroke-width="2"/>
<polyline points="2996.8,882.3 3009.7,918.6 3014.9,1006.6 3017.5,1032.4 3020.1,1095.8" stroke="#303030" stroke-width="2"/>
<polyline points="2864.8,729.6 2890.7,758.1" stroke="#303030" stroke-width="2"/>
<polyline points="2518.0,1076.4 2580.1,1079.0 2621.5,1073.8 2647.4,1084.2 2662.9,1095.8" stroke="#303030" stroke-width="2"/>
<polyline points="2621.5,1073.8 2634.5,993.6 2655.2,960.0 2678.5,941.9 2691.4,923.7 2694.0,908.2" stroke="#303030" stroke-width="2"/>
<polyline points="2662.9,1095.8 2668.1,1053.1 2699.2,1024.7 2719.9,1001.4 2743.2,970.3 2761.3,916.0 2771.6,861.6 2761.3,846.1 2756.1,830.6 2738.0,838.3 2719.9,846.1 2699.2,848.7" stroke="#303030" stroke-width="2"/>
<polyline points="2569.8,1076.4 2564.6,1055.7 2556.8,1035.0 2541.3,1029.9" stroke="#303030" stroke-width="2"/>
<polyline points="2911.4,877.2 2867.4,882.3 2846.7,874.6" stroke="#303030" stroke-width="2"/>
<polyline points="2569.8,696.0 2585.3,721.9 2595.6,734.8 2603.4,747.8 2595.6,773.6 2580.1,794.3 2569.8,815.0" stroke="#303030" stroke-width="2"/>
<polyline points="718.0,1212.0 788.6,1189.3 818.8,1161.5 828.9,1152.7 856.6,1154.0 899.5,1123.7 927.2,1111.1 934.8,1096.0" stroke="#303030" stroke-width="2"/>
<polyline points="891.9,1096.0 889.4,1123.7 909.6,1159.0 939.8,1179.2 960.0,1184.2 980.2,1194.3 997.8,1217.0 1007.9,1224.6 1023.0,1225.8 1043.2,1230.9 1081.0,1259.9 1121.3,1285.1 1149.1,1317.8 1176.8,1327.9 1212.1,1339.3 1260.0,1358.2 1317.9,1373.3" stroke="#303030" stroke-width="2"/>
<polyline points="980.2,1096.0 991.5,1116.2 991.5,1136.3 1000.3,1143.9 1023.0,1164.1 1021.8,1179.2 1010.4,1212.0 1007.9,1224.6 995.3,1237.2 995.3,1259.9 980.2,1272.5 975.1,1287.6 972.6,1310.3 965.0,1327.9 982.7,1338.0 1000.3,1373.3" stroke="#303030" stroke-width="2"/>
<polyline points="718.0,1214.5 753.3,1244.7 776.0,1272.5 801.2,1290.1 826.4,1317.8 859.2,1327.9 894.5,1340.5 932.3,1358.2 970.1,1373.3" stroke="#303030" stroke-width="2"/>
<polyline points="1194.4,1096.0 1219.6,1154.0 1224.7,1169.1 1224.7,1196.8 1237.3,1227.1 1244.8,1262.4 1260.0,1287.6 1285.2,1317.8 1297.8,1338.0 1317.9,1360.7" stroke="#303030" stroke-width="2"/>
<polyline points="1282.7,1096.0 1297.8,1106.1 1317.9,1108.6" stroke="#303030" stroke-width="2"/>
<polyline points="1318.0,1116.2 1333.1,1121.2 1359.6,1126.2 1378.5,1111.1 1393.6,1103.6 1441.5,1099.8 1451.6,1113.6 1479.3,1117.4 1509.6,1117.4 1537.3,1111.1 1557.5,1116.2 1605.4,1136.3 1645.7,1130.0 1660.8,1135.1 1681.0,1133.8 1693.6,1140.1 1696.1,1127.5 1681.0,1111.1 1678.5,1096.0" stroke="#303030" stroke-width="2"/>
<polyline points="1441.5,1099.8 1436.5,1126.2 1435.2,1151.5 1428.9,1171.6 1426.4,1194.3 1428.9,1227.1 1413.8,1239.7 1403.7,1257.3 1393.6,1277.5 1388.6,1307.7 1348.2,1343.0 1328.1,1365.7 1328.1,1378.3 1318.0,1398.5" stroke="#303030" stroke-width="2"/>
<polyline points="1441.5,1099.8 1459.2,1141.4 1479.3,1181.7 1512.1,1239.7 1522.2,1285.1 1555.0,1312.8 1557.5,1322.9 1562.5,1358.2 1585.2,1370.8 1620.5,1403.5 1640.7,1411.9" stroke="#303030" stroke-width="2"/>
<polyline points="1318.0,1368.2 1328.1,1378.3 1378.5,1411.9" stroke="#303030" stroke-width="2"/>
<polyline points="1391.1,1307.7 1444.0,1290.1 1484.4,1275.0 1514.6,1254.8 1549.9,1239.7 1585.2,1219.5 1618.0,1199.4 1648.2,1174.1 1670.9,1159.0 1693.6,1140.1 1698.6,1146.4 1721.3,1156.5 1761.7,1184.2 1779.3,1209.4 1797.0,1247.2 1809.6,1254.8 1847.4,1256.1 1882.7,1267.4" stroke="#303030" stroke-width="2"/>
<polyline points="1696.1,1127.5 1701.2,1141.4 1691.1,1184.2 1693.6,1209.4 1678.5,1244.7 1668.4,1277.5 1670.9,1295.1 1660.8,1327.9 1648.2,1343.0 1635.6,1373.3 1643.2,1411.9" stroke="#303030" stroke-width="2"/>
<polyline points="1696.1,1127.5 1706.2,1131.3 1718.8,1123.7 1731.4,1096.0" stroke="#303030" stroke-width="2"/>
<polyline points="1713.8,1128.8 1751.6,1148.9 1774.3,1154.0 1809.6,1165.3 1847.4,1166.6 1857.5,1174.1 1882.7,1161.5 1900.3,1164.1 1917.9,1169.1" stroke="#303030" stroke-width="2"/>
<polyline points="2016.3,1096.0 2012.5,1146.4 2021.4,1171.6 2023.9,1189.3 2049.1,1214.5 2051.6,1224.6 2050.3,1247.2 2051.6,1264.9" stroke="#303030" stroke-width="2"/>
<polyline points="1918.0,1176.7 1940.7,1186.7 1963.4,1206.9 2023.9,1201.9 2039.0,1184.2 2069.2,1169.1 2084.4,1159.0 2094.5,1164.1" stroke="#303030" stroke-width="2"/>
<polyline points="2328.9,1111.1 2346.5,1121.2 2384.3,1126.2 2422.2,1121.2 2460.0,1103.6 2472.6,1096.0" stroke="#303030" stroke-width="2"/>
<polyline points="2245.7,1191.8 2238.1,1212.0 2223.0,1237.2 2202.9,1252.3 2185.2,1275.0 2172.6,1287.6" stroke="#303030" stroke-width="2"/>
<polyline points="2288.6,1136.3 2281.0,1171.6" stroke="#303030" stroke-width="2"/>
<polyline points="2384.3,1166.6 2389.4,1196.8 2407.0,1234.6 2397.0,1259.9 2371.7,1287.6" stroke="#303030" stroke-width="2"/>
<polyline points="2366.7,1350.6 2349.1,1322.9 2351.6,1373.3 2366.7,1411.9" stroke="#303030" stroke-width="2"/>
<polyline points="2639.6,1096.0 2640.9,1111.5 2629.3,1145.2 2631.9,1207.3 2631.9,1251.3 2629.3,1259.0 2637.0,1266.8 2657.8,1279.7 2675.9,1303.0 2673.3,1323.7 2668.1,1334.1 2660.3,1412.0" stroke="#303030" stroke-width="2"/>
<polyline points="2518.0,1191.8 2530.9,1209.9 2533.5,1225.4 2564.6,1228.0 2572.3,1243.5 2593.1,1250.0 2606.0,1261.6 2621.5,1266.8 2639.6,1266.8" stroke="#303030" stroke-width="2"/>
<polyline points="3007.1,1108.9 3017.5,1124.5 3040.8,1145.2 3046.0,1145.2 3056.3,1178.8 3082.2,1225.4 3089.9,1277.2 3097.7,1310.8 3100.3,1323.7 3087.4,1339.3 3071.8,1378.1 3058.9,1412.0" stroke="#303030" stroke-width="2"/>
<polyline points="893.1,296.0 873.8,352.7 864.8,476.3 859.6,527.8 853.2,682.3 851.9,695.9" stroke="#333333" stroke-width="4"/>
<polyline points="718.0,665.6 777.2,664.3 813.3,654.0 851.9,657.8" stroke="#333333" stroke-width="4"/>
<polyline points="777.2,597.3 772.1,617.9 775.9,682.3 779.8,695.9" stroke="#333333" stroke-width="4"/>
<polyline points="718.0,730.8 743.8,721.8 785.0,712.7 803.0,715.3 854.5,711.5 862.2,716.6 888.0,719.2 924.0,725.6 949.8,732.1 965.2,742.4 1001.3,742.4 1042.5,747.5 1104.3,760.4 1181.6,784.8 1233.1,781.0 1318.1,790.0" stroke="#333333" stroke-width="4"/>
<polyline points="718.0,814.5 738.6,802.9 769.5,793.9 803.0,786.1 828.7,774.5 840.3,760.4 851.9,729.5 849.3,701.2" stroke="#333333" stroke-width="4"/>
<polyline points="718.0,876.3 738.6,871.1 766.9,876.3 779.8,899.5 788.8,922.6 785.0,953.5 786.2,984.4 791.4,1015.3" stroke="#333333" stroke-width="4"/>
<polyline points="851.9,711.5 851.9,729.5 841.6,760.4 844.2,824.8 841.6,850.5 857.1,881.4 858.4,902.0 872.5,948.4 882.8,961.3" stroke="#333333" stroke-width="4"/>
<polyline points="814.6,729.5 810.7,781.0 790.1,835.1 769.5,876.3 756.6,940.7 733.5,966.4" stroke="#333333" stroke-width="4"/>
<polyline points="718.0,948.4 769.5,941.9 823.6,949.7 872.5,953.5 898.3,943.2 931.8,941.9 973.0,941.9 1021.9,912.3 1104.3,889.1 1168.7,863.4 1233.1,864.7 1318.1,840.2" stroke="#333333" stroke-width="4"/>
<polyline points="718.0,992.2 756.6,994.7 821.0,989.6 882.8,994.7 929.2,1008.9 975.5,999.9 1027.0,1020.5 1104.3,1051.4 1181.6,1066.8 1258.8,1087.4 1284.6,1095.9" stroke="#333333" stroke-width="4"/>
<polyline points="769.5,988.3 774.7,1035.9 756.6,1095.9" stroke="#333333" stroke-width="4"/>
<polyline points="795.3,1012.8 826.2,1033.4 846.8,1072.0 872.5,1095.9" stroke="#333333" stroke-width="4"/>
<polyline points="1318.0,817.0 1356.6,786.1 1381.1,784.8 1423.6,761.7 1472.5,759.1 1508.6,751.4 1565.2,764.2 1588.4,759.1 1606.4,761.7 1647.6,753.9 1665.7,737.2 1699.1,721.8 1709.4,710.2 1735.2,697.3" stroke="#333333" stroke-width="4"/>
<polyline points="869.2,1096.0 904.5,1123.7 912.1,1141.4 909.6,1148.9 912.1,1161.5 910.8,1222.0 919.7,1247.2 939.8,1287.6 957.5,1325.4 982.7,1350.6 997.8,1373.3" stroke="#333333" stroke-width="4"/>
<polyline points="718.0,1156.5 740.7,1136.3 750.8,1116.2 755.8,1096.0" stroke="#333333" stroke-width="4"/>
<polyline points="1387.5,296.0 1388.8,311.5 1400.4,314.0 1396.5,323.0 1415.9,333.3 1414.6,344.9 1423.6,356.5 1422.3,360.4 1417.2,361.7 1413.3,373.3 1410.7,381.0 1415.9,386.1 1415.9,397.7 1426.2,406.7 1427.5,420.9 1437.8,429.9 1431.3,433.8 1421.0,450.5 1421.0,466.0 1419.7,476.3 1417.2,491.7 1404.3,496.9 1406.8,512.3 1392.7,514.9 1395.3,522.6" stroke="#1a1a1a" stroke-width="2.5"/>
<polyline points="1318.0,648.8 1325.7,651.4 1328.3,647.5 1343.8,655.3 1352.8,656.5 1351.5,661.7 1346.3,672.0 1354.1,669.4 1363.1,677.1 1361.8,684.9 1351.5,688.7 1350.2,695.9" stroke="#1a1a1a" stroke-width="2.5"/>
<polyline points="1328.3,614.1 1318.0,603.8 1325.7,594.7 1333.5,597.3 1343.8,587.0 1333.5,578.0" stroke="#1a1a1a" stroke-width="2.5"/>
<polyline points="2379.0,596.0 2391.9,587.0 2407.3,583.1 2435.6,574.1 2457.5,563.8 2461.4,558.7 2453.7,551.0 2456.2,545.8 2471.7,538.1 2475.6,529.1 2497.4,523.9 2502.6,527.8 2503.9,543.2 2507.8,547.1 2518.1,543.2" stroke="#1a1a1a" stroke-width="2.5"/>
<polyline points="2335.2,298.6 2350.7,302.4 2361.0,296.0" stroke="#1a1a1a" stroke-width="2.5"/>
<polyline points="2397.0,296.0 2415.0,299.9 2433.1,301.2 2458.8,296.0" stroke="#1a1a1a" stroke-width="2.5"/>
<polyline points="2487.1,306.3 2518.1,296.0" stroke="#1a1a1a" stroke-width="2.5"/>
<polyline points="2576.2,296.0 2578.8,307.6 2600.8,338.7 2621.5,347.8 2642.2,362.0 2661.6,373.6 2662.9,391.8" stroke="#1a1a1a" stroke-width="2.5"/>
<polyline points="2518.0,540.6 2528.4,528.9 2549.1,513.4 2569.8,518.6 2568.5,482.3 2580.1,473.3 2581.4,487.5 2598.2,490.1 2598.2,505.6 2618.9,513.4 2624.1,506.9 2637.0,518.6 2642.2,492.7 2655.2,491.4 2669.4,505.6 2668.1,518.6 2679.7,523.7 2675.9,539.3 2683.6,545.7 2696.6,545.7" stroke="#1a1a1a" stroke-width="2.5"/>
<polyline points="1350.2,696.0 1355.3,708.9 1369.5,711.5 1364.4,720.5 1357.9,726.9 1364.4,732.1 1363.1,739.8 1373.4,742.4 1369.5,747.5 1343.8,765.5 1356.6,770.7 1359.2,781.0 1354.1,793.9 1355.3,804.2 1351.5,817.0 1343.8,826.1 1356.6,844.1 1343.8,860.8 1338.6,855.7 1342.5,876.3 1336.0,887.9 1343.8,899.5 1354.1,905.9 1372.1,912.3 1381.1,927.8 1386.2,944.5 1395.3,945.8 1401.7,936.8 1418.4,938.1 1421.0,956.1 1433.9,972.8 1451.9,980.6 1464.8,983.1 1482.8,981.9 1498.3,970.3 1521.5,972.8 1534.3,971.6 1549.8,989.6 1562.7,1012.8 1573.0,1032.1 1593.6,1032.1 1616.7,1037.2" stroke="#1a1a1a" stroke-width="2.5"/>
<polyline points="1745.5,822.2 1761.0,806.7 1781.6,801.6 1794.4,788.7 1807.3,787.4 1820.2,799.0 1830.5,810.6 1843.4,799.0 1856.2,783.6 1874.3,770.7 1897.4,773.3 1907.8,764.2 1918.1,756.5" stroke="#1a1a1a" stroke-width="2.5"/>
<polyline points="1709.4,1028.2 1737.8,1015.3 1753.2,1032.1 1755.8,1051.4 1771.3,1064.3 1789.3,1079.7 1802.2,1095.9" stroke="#1a1a1a" stroke-width="2.5"/>
<polyline points="1918.0,760.4 1933.5,765.5 1951.5,760.4 1966.9,764.2 1982.4,772.0 1995.3,773.3 1992.7,781.0 2005.6,788.7 2013.3,796.4 2015.9,806.7 2026.2,809.3 2044.2,827.3 2059.6,828.6 2067.4,817.0 2082.8,824.8 2088.0,840.2 2095.7,835.1 2118.9,842.8 2124.0,853.1 2131.8,858.2 2149.8,860.8 2162.7,866.0 2188.4,863.4 2201.3,873.7 2227.0,871.1 2247.6,873.7 2257.9,884.0 2278.5,878.8 2288.8,894.3 2330.1,889.1 2355.8,894.3 2381.6,896.9 2399.6,909.8 2430.5,916.2 2453.7,905.9 2461.4,891.7 2484.6,876.3 2484.6,855.7 2482.0,835.1 2494.9,819.6 2505.2,817.0 2518.1,819.6" stroke="#1a1a1a" stroke-width="2.5"/>
<polyline points="2945.0,825.4 2932.1,835.8 2924.3,851.3 2921.7,864.2 2908.8,877.2 2908.8,890.1 2929.5,879.7 2937.3,856.5 2958.0,840.9" stroke="#1a1a1a" stroke-width="2.5"/>
<polyline points="1454.1,1355.6 1459.2,1338.0 1449.1,1325.4 1454.1,1319.1 1469.2,1329.2 1474.3,1338.0 1489.4,1333.0 1499.5,1324.1 1514.6,1330.4 1519.7,1338.0 1529.7,1330.4 1537.3,1335.5 1539.8,1326.7 1557.5,1317.8 1570.1,1322.9 1585.2,1311.5 1592.8,1322.9 1602.9,1315.3 1605.4,1300.2 1618.0,1307.7 1633.1,1295.1 1645.7,1287.6 1665.9,1286.3 1670.9,1267.4 1683.5,1267.4 1698.6,1271.2 1716.3,1262.4 1736.5,1253.5 1736.5,1244.7 1751.6,1233.4 1761.7,1222.0 1771.7,1212.0 1779.3,1206.9 1781.8,1196.8 1797.0,1179.2 1809.6,1164.1 1817.1,1141.4 1814.6,1121.2 1802.0,1106.1 1802.0,1096.0" stroke="#1a1a1a" stroke-width="2.5"/>
<polyline points="1318.0,1401.0 1328.1,1383.4 1338.2,1378.3 1350.8,1360.7 1360.9,1353.1" stroke="#1a1a1a" stroke-width="2.5"/>
<polyline points="2013.8,1130.0 2036.5,1123.7 2046.6,1119.9 2061.7,1121.2 2066.7,1136.3 2079.3,1131.3 2097.0,1143.9 2117.1,1148.9 2134.8,1148.9 2165.0,1143.9 2182.7,1140.1 2200.3,1146.4 2220.5,1154.0 2238.1,1166.6 2245.7,1174.1 2258.3,1176.7 2281.0,1176.7 2298.6,1176.7 2313.8,1169.1 2323.8,1159.0 2336.5,1166.6 2346.5,1176.7 2366.7,1186.7 2381.8,1206.9 2391.9,1224.6 2399.5,1204.4 2417.1,1201.9 2422.2,1214.5 2442.3,1224.6 2465.0,1217.0 2480.1,1229.6 2497.8,1234.6 2517.9,1229.6" stroke="#1a1a1a" stroke-width="2.5"/>
<polyline points="2518.0,1230.6 2528.4,1226.7 2549.1,1235.8 2562.0,1246.1 2569.8,1240.9 2564.6,1253.9 2567.2,1269.4 2582.7,1262.9 2600.8,1264.2 2604.7,1272.0 2595.6,1279.7 2600.8,1292.7 2613.8,1303.0 2606.0,1310.8 2603.4,1321.2 2616.3,1318.6 2637.0,1317.3 2652.6,1326.3 2673.3,1321.2 2675.9,1303.0 2660.3,1292.7 2662.9,1287.5 2683.6,1282.3 2696.6,1297.9" stroke="#1a1a1a" stroke-width="2.5"/>
<polyline points="2862.2,1323.7 2877.7,1303.0 2888.1,1290.1 2898.4,1277.2 2908.8,1288.8 2921.7,1295.3 2934.7,1277.2 2939.8,1256.5 2955.4,1253.9 2968.3,1233.2 2963.1,1212.5 2968.3,1204.7 2960.5,1184.0 2968.3,1171.1 2973.5,1155.5 2986.4,1142.6 2983.8,1127.1 2981.3,1119.3 2994.2,1116.7 3007.1,1108.9 3007.1,1101.2 3020.1,1096.0" stroke="#1a1a1a" stroke-width="2.5"/>
<polyline points="2862.2,1331.5 2849.3,1344.4 2854.4,1367.7 2846.7,1375.5 2828.6,1385.9 2842.8,1404.0 2842.8,1412.0" stroke="#1a1a1a" stroke-width="2.5"/>
<polyline points="733.5,297.3 778.5,296.0 781.1,310.2 796.5,317.9 846.8,333.3 826.2,368.1 824.9,376.4 815.9,376.4 805.6,372.0 804.3,368.1 795.3,353.9 777.2,359.9 760.5,361.7 765.6,387.4 782.4,386.1 786.2,418.3 803.0,420.9 823.6,414.5 841.6,422.7 846.8,436.4 866.1,466.0 866.9,491.7 859.6,494.3 858.4,491.7 832.6,499.5 818.4,482.7 806.8,485.3 805.6,505.9 773.4,513.6 773.4,507.2 742.5,525.2 718.0,502.0" stroke="#474747" stroke-width="2.5"/>
<polyline points="867.4,475.8 906.0,466.0 907.3,481.4 934.3,482.7 935.6,475.8 967.8,475.0 966.5,451.8 973.0,445.4 997.4,443.3 1011.6,442.8 1018.0,445.4 1030.9,459.5 1045.1,435.1 1046.4,444.1 1050.2,441.5 1054.1,427.3 1054.1,421.7 1042.5,422.7 1033.5,406.7 1023.2,388.7 1047.6,382.3 1069.5,369.4 1086.3,366.0 1092.7,388.7 1103.0,408.0 1106.9,432.5 1096.6,426.8 1081.1,453.1 1083.7,463.4 1081.1,460.8 1063.1,467.3 1050.2,473.7 1033.5,486.6 1025.8,488.6 1034.8,521.3 1024.5,531.6 1027.0,556.1 1023.2,561.3 1030.9,572.8 1032.2,589.6 1027.0,592.2 1037.3,626.9 1050.2,666.8 1055.4,673.3 1068.2,679.7 1076.0,651.4 1096.6,660.4 1090.1,684.9 1092.7,691.3 1097.9,688.7 1109.4,690.0 1118.5,682.3 1136.5,679.7 1124.9,666.8 1118.5,666.8 1119.8,656.5 1131.3,654.0 1133.9,663.0 1148.1,666.8 1149.4,655.3 1141.6,651.4 1135.2,615.3 1118.5,619.2 1112.0,602.5 1139.1,580.6 1150.7,594.7 1142.9,616.6 1167.4,593.5 1171.3,611.5 1185.4,633.4 1216.3,619.2 1204.7,601.2 1220.2,587.0 1233.1,590.9 1240.8,594.7 1252.4,576.7 1257.5,594.7 1261.4,599.9 1252.4,606.3 1229.2,614.1 1235.6,623.1 1233.1,645.0 1243.4,646.2 1244.7,656.5 1197.0,674.6 1190.6,695.9" stroke="#474747" stroke-width="2.5"/>
<polyline points="909.9,423.5 922.7,418.3 912.4,396.4 907.3,391.3 938.2,377.1 939.5,381.0 962.7,378.4 952.4,355.2 1018.0,344.9 1019.3,339.8 1032.2,338.5 1018.0,308.9 1037.3,296.0" stroke="#474747" stroke-width="2.5"/>
<polyline points="1014.2,384.8 1032.2,377.1 1033.5,372.0 1039.9,368.1 1041.2,383.6" stroke="#474747" stroke-width="2.5"/>
<polyline points="1164.8,296.0 1167.4,310.2 1181.6,306.8 1199.6,346.2 1221.5,336.7 1247.2,342.4 1257.5,357.8 1255.0,361.7 1275.6,368.6 1255.0,381.0 1256.2,387.4 1233.1,383.6 1234.4,417.0 1227.9,444.1 1231.8,449.2 1229.2,457.0 1245.9,462.1 1253.7,467.3 1260.1,481.4 1294.9,472.4 1298.7,480.1 1291.0,502.0 1276.8,518.8 1307.8,508.5 1315.5,532.9" stroke="#474747" stroke-width="2.5"/>
<polyline points="718.0,541.9 737.3,563.8 725.7,570.3 718.0,584.4" stroke="#474747" stroke-width="2.5"/>
<polyline points="718.0,592.2 745.0,599.9 743.8,612.8 732.2,611.5 718.0,605.0" stroke="#474747" stroke-width="2.5"/>
<polyline points="1318.0,531.6 1330.9,526.5 1342.5,511.0 1370.8,514.4 1381.1,509.8 1385.0,527.8 1408.1,532.4 1435.2,528.3 1468.7,537.6 1469.9,527.3 1502.1,521.9 1515.0,525.2 1544.6,509.2 1571.7,516.2 1592.3,526.0 1602.6,504.1 1616.7,504.1 1621.9,506.7 1627.0,517.5 1650.2,505.1 1650.2,491.0 1674.7,486.6 1708.2,492.2 1705.6,459.5 1711.5,433.0 1708.2,386.1 1694.5,357.0 1719.8,352.7 1720.3,342.4 1750.1,365.5 1750.1,375.3 1764.8,372.5 1776.4,374.0 1777.7,356.5 1779.0,323.8 1784.1,321.8 1803.4,326.9 1793.1,306.3 1791.9,301.2 1789.3,296.0" stroke="#474747" stroke-width="2.5"/>
<polyline points="2888.1,296.0 2893.3,302.5 2876.4,321.9 2886.8,404.7 2882.9,424.1 2898.4,440.9 2901.0,452.6 2898.4,459.0" stroke="#474747" stroke-width="2.5"/>
<polyline points="2937.3,446.1 2998.1,477.2 3005.8,440.9 3027.8,412.5" stroke="#474747" stroke-width="2.5"/>
<polyline points="2998.1,477.2 2961.8,522.4 2958.0,578.1 2951.5,591.0 2951.5,605.3 2943.7,613.0 2963.1,626.0 2976.1,629.9 3040.8,632.4 3040.8,622.1 3056.3,609.1 3060.2,588.4 3082.2,575.5 3089.9,566.4 3133.9,566.4" stroke="#474747" stroke-width="2.5"/>
<polyline points="2963.1,626.0 2977.4,668.7 2968.3,695.8" stroke="#474747" stroke-width="2.5"/>
<polyline points="2691.4,675.1 2709.5,682.9 2749.6,679.0 2752.2,684.2 2763.9,685.5 2772.9,695.8" stroke="#474747" stroke-width="2.5"/>
<polyline points="3022.7,695.8 3027.8,676.4 3043.4,668.7 3038.2,660.9 3047.2,642.8 3040.8,632.4" stroke="#474747" stroke-width="2.5"/>
<polyline points="2934.7,695.8 2947.6,684.2 2968.3,688.1" stroke="#474747" stroke-width="2.5"/>
<polyline points="1189.3,696.0 1186.7,703.7 1203.4,712.7 1191.9,729.5 1181.6,756.5 1188.0,764.2 1182.8,792.6 1155.8,783.6 1157.1,788.7 1153.2,811.9 1155.8,837.6 1146.8,855.7 1130.1,854.4 1101.7,860.8 1095.3,844.1 1092.7,847.9 1069.5,847.9 1030.9,837.1 1011.6,853.1 1005.1,886.6 984.5,879.4 982.0,886.6 974.2,885.3 967.8,887.9 974.2,898.2 965.2,902.0 967.8,908.5 961.4,922.6 976.8,931.6 979.4,949.7 982.0,948.4 980.7,976.7 1025.8,989.6 1028.3,1014.1 1051.5,1025.6 1051.5,1029.5 1069.5,1041.1 1088.8,1028.2 1115.9,1021.8 1122.3,1042.4 1132.6,1039.8 1144.2,1072.0 1115.9,1082.3 1105.6,1095.9" stroke="#474747" stroke-width="2.5"/>
<polyline points="2527.1,822.8 2533.5,926.3 2543.9,993.6 2536.1,1001.4 2534.8,1029.9 2518.0,1053.1" stroke="#474747" stroke-width="2.5"/>
<polyline points="2518.0,815.0 2527.1,822.8 2541.3,825.4 2554.2,822.8 2569.8,820.2" stroke="#474747" stroke-width="2.5"/>
<polyline points="2831.1,765.9 2895.8,727.1 2901.0,730.9" stroke="#474747" stroke-width="2.5"/>
<polyline points="2831.1,765.9 2820.8,714.1 2807.9,718.0 2797.5,714.1 2776.8,696.0" stroke="#474747" stroke-width="2.5"/>
<polyline points="2823.4,765.9 2846.7,778.8 2838.9,799.5 2826.0,809.9 2833.7,817.6 2823.4,825.4 2833.7,840.9 2828.6,864.2 2826.0,874.6 2813.0,892.7 2815.6,910.8 2802.7,931.5 2784.6,936.7 2782.0,944.4 2802.7,967.7 2815.6,962.6 2833.7,967.7 2838.9,953.5 2854.4,949.6 2855.7,1004.0 2864.8,1011.7 2875.1,993.6 2882.9,980.7 2890.7,975.5 2885.5,944.4 2882.9,934.1 2890.7,936.7 2906.2,931.5 2914.0,916.0 2926.9,908.2 2924.3,903.0 2914.0,900.5 2908.8,887.5 2926.9,872.0 2932.1,856.5 2921.7,850.0 2914.0,840.9 2911.4,833.2" stroke="#474747" stroke-width="2.5"/>
<polyline points="2875.1,993.6 2870.0,1014.3 2888.1,1029.9 2877.7,1058.3 2880.3,1076.4 2867.4,1095.8" stroke="#474747" stroke-width="2.5"/>
<polyline points="2914.0,901.7 2942.4,888.8 2994.2,881.0" stroke="#474747" stroke-width="2.5"/>
<polyline points="1106.2,1096.0 1096.1,1111.1 1096.1,1137.6 1060.8,1135.1 1045.7,1130.0 1038.1,1133.8 1030.6,1141.4 1034.4,1154.0 1007.9,1148.9 1007.9,1137.6 1002.9,1137.6 999.1,1142.6 1005.4,1137.6 985.2,1130.0 978.9,1128.8 977.6,1161.5 982.7,1171.6 980.2,1176.7 970.1,1177.9 968.8,1184.2 960.0,1188.0 956.2,1193.1 961.3,1203.1 938.6,1204.4 937.3,1212.0 917.1,1213.2 908.3,1247.2 914.6,1247.2 919.7,1272.5 890.7,1277.5 889.4,1283.8 876.8,1288.8 875.5,1305.2 879.3,1315.3 873.0,1336.7 861.7,1335.5 859.2,1329.2 839.0,1334.2 828.9,1360.7" stroke="#474747" stroke-width="2.5"/>
<polyline points="718.0,1259.9 725.6,1280.0 733.1,1282.5 728.1,1290.1 743.2,1295.1 750.8,1305.2 777.2,1317.8 778.5,1338.0" stroke="#474747" stroke-width="2.5"/>
<polyline points="2171.3,1290.1 2223.0,1280.0 2224.3,1297.7 2219.2,1310.3 2233.1,1325.4 2228.1,1344.3 2235.6,1335.5 2283.5,1305.2 2291.1,1310.3 2303.7,1297.7 2321.3,1305.2 2341.5,1322.9 2356.6,1307.7 2346.5,1297.7 2354.1,1290.1 2386.9,1292.6 2389.4,1282.5 2417.1,1267.4 2437.3,1281.3 2472.6,1275.0 2463.8,1312.8 2457.5,1338.0 2437.3,1353.1 2449.9,1373.3 2462.5,1385.9 2495.3,1393.5 2505.3,1411.9" stroke="#474747" stroke-width="2.5"/>
<polyline points="2146.1,1286.3 2162.5,1280.0 2171.3,1290.1" stroke="#474747" stroke-width="2.5"/>
<polyline points="2235.6,1096.0 2258.3,1101.0 2265.9,1103.6 2286.0,1104.8 2291.1,1116.2 2306.2,1116.2 2311.2,1106.1 2321.3,1108.6 2323.8,1096.0" stroke="#474747" stroke-width="2.5"/>
<polyline points="2495.3,1096.0 2500.3,1138.9 2490.2,1143.9 2492.7,1204.4 2465.0,1217.0 2449.9,1222.0 2437.3,1264.9" stroke="#474747" stroke-width="2.5"/>
<polyline points="2745.7,1107.6 2756.1,1111.5 2763.9,1106.4 2776.8,1102.5 2789.7,1106.4 2792.3,1106.4 2810.4,1102.5 2818.2,1098.6 2841.5,1096.0" stroke="#474747" stroke-width="2.5"/>
<polyline points="2700.5,296.0 2704.3,327.1 2708.2,373.6 2705.6,451.3 2700.5,516.0 2683.6,549.6 2678.5,567.7 2679.7,593.6 2688.8,594.9 2695.3,658.3 2690.1,676.4 2678.5,686.8 2675.9,695.8" stroke="#4a4a4a" stroke-width="5"/>
<polyline points="2518.1,778.4 2403.4,698.6 2353.2,711.5 2327.5,748.8 2260.5,809.3 2254.1,842.8 2232.2,889.1 2178.1,996.0 2144.6,1028.2 2129.2,1064.3 2113.7,1078.4 2106.0,1095.9" stroke="#4a4a4a" stroke-width="5"/>
<polyline points="2678.5,696.0 2656.5,765.9 2678.5,826.7 2694.0,851.3 2732.8,857.7 2735.4,877.2 2743.2,941.9 2727.6,1019.5 2728.9,1076.4 2738.0,1095.8" stroke="#4a4a4a" stroke-width="5"/>
<polyline points="2518.0,776.2 2625.4,852.6 2678.5,826.7" stroke="#4a4a4a" stroke-width="5"/>
<polyline points="2107.1,1096.0 2100.8,1111.1 2095.7,1146.4 2093.2,1196.8 2094.5,1247.2 2097.0,1272.5 2124.7,1277.5 2144.9,1285.1 2144.9,1297.7 2149.9,1322.9 2182.7,1350.6 2187.7,1363.2 2186.5,1385.9 2177.6,1398.5 2185.2,1411.9" stroke="#4a4a4a" stroke-width="5"/>
<polyline points="2735.4,1096.0 2757.4,1142.6 2757.4,1314.7 2750.9,1316.0 2743.2,1297.9 2739.3,1295.3 2725.0,1297.9 2717.3,1304.3 2709.5,1297.9 2696.6,1297.9 2697.9,1305.6 2687.5,1362.6 2691.4,1370.3 2683.6,1404.0 2683.6,1412.0" stroke="#4a4a4a" stroke-width="5"/>
<polyline points="2757.4,1314.7 2761.3,1318.6 2766.4,1325.0 2782.0,1328.9 2792.3,1323.7 2794.9,1313.4 2800.1,1310.8 2813.0,1314.7 2818.2,1319.9 2833.7,1323.7 2844.1,1323.7 2851.9,1327.6 2859.6,1323.7 2862.2,1328.9 3074.4,1330.2 3113.2,1328.9 3131.4,1325.0" stroke="#4a4a4a" stroke-width="5"/>
</g>
<polygon points="3134.0,593.6 3105.5,619.5 3082.0,653.0 3064.0,696.0 3053.7,734.8 3051.0,766.0 3035.6,781.0 3022.7,791.8 3002.0,815.0 2984.0,846.0 2965.7,848.7 2971.0,864.0 2989.0,879.7 3002.0,903.0 3017.5,926.0 3022.7,957.0 3025.0,993.6 3033.0,1019.5 3039.5,1030.0 3033.0,1006.6 3028.0,980.7 3035.6,967.7 3051.0,962.6 3082.0,998.8 3095.0,1017.0 3110.6,1017.0 3121.0,980.7 3134.0,944.0" fill="#121212"/>
<polyline points="3134.0,593.6 3105.5,619.5 3082.0,653.0 3064.0,696.0 3053.7,734.8 3051.0,766.0 3035.6,781.0 3022.7,791.8 3002.0,815.0 2984.0,846.0 2965.7,848.7 2971.0,864.0 2989.0,879.7 3002.0,903.0 3017.5,926.0 3022.7,957.0 3025.0,993.6 3033.0,1019.5 3039.5,1030.0 3033.0,1006.6 3028.0,980.7 3035.6,967.7 3051.0,962.6 3082.0,998.8 3095.0,1017.0 3110.6,1017.0 3121.0,980.7" fill="none" stroke="#080808" stroke-width="3"/>
<polygon points="3134.0,998.0 3118.0,1001.0 3124.0,1022.0 3130.0,1100.0 3128.0,1329.0 3118.0,1412.0 3134.0,1412.0" fill="#121212"/>
<polyline points="3134.0,998.0 3118.0,1001.0 3124.0,1022.0 3130.0,1100.0 3128.0,1329.0 3118.0,1412.0" fill="none" stroke="#080808" stroke-width="3"/>
<polygon points="1109.4,383.6 1119.8,370.7 1140.4,368.1 1155.8,350.1 1163.5,355.2 1172.5,365.5 1161.0,373.3 1161.0,378.4 1140.4,388.7 1122.3,395.2 1110.7,391.3" fill="#161616"/>
<polygon points="1332.2,574.1 1336.0,561.3 1351.5,547.1 1369.5,532.9 1387.5,536.8 1415.9,543.2 1400.4,552.2 1379.8,549.7 1359.2,563.8 1343.8,571.6" fill="#161616"/>
<polygon points="1637.3,326.9 1650.2,311.5 1664.4,298.6 1678.5,296.0 1673.4,303.7 1652.8,319.2" fill="#161616"/>
<polygon points="1873.0,523.9 1874.3,512.3 1888.4,496.9 1896.2,481.4 1897.4,504.6 1887.1,517.5" fill="#161616"/>
<polygon points="2709.5,402.1 2722.5,394.3 2738.0,391.8 2743.2,365.9 2758.7,368.5 2766.4,376.2 2756.1,394.3 2753.5,415.0 2757.4,428.0 2750.9,446.1 2740.6,443.5 2731.5,422.8 2738.0,415.0 2738.0,407.3 2722.5,409.9" fill="#161616"/>
<polygon points="1041.2,804.2 1052.8,796.4 1076.0,791.3 1081.1,801.6 1068.2,806.7 1063.1,819.6 1057.9,827.3 1057.9,811.9 1042.5,809.3" fill="#161616"/>
<polygon points="1355.3,796.4 1363.1,793.9 1373.4,801.6 1372.1,810.6 1363.1,814.5" fill="#161616"/>
<polygon points="1722.3,850.5 1730.1,835.1 1745.5,822.2 1746.8,850.5 1740.4,857.0" fill="#161616"/>
<polygon points="1803.4,1041.1 1804.7,1012.8 1816.3,1023.1 1818.9,1041.1 1809.9,1051.4" fill="#161616"/>
<polygon points="2286.3,886.6 2304.3,880.1 2330.1,877.6 2324.9,894.3 2291.4,894.3" fill="#161616"/>
<polygon points="2003.0,775.8 2010.7,769.4 2019.7,778.4 2013.3,793.9 2003.0,783.6" fill="#161616"/>
<polygon points="2426.6,726.9 2445.9,696.0 2464.0,696.0 2458.8,729.5 2433.1,739.8" fill="#161616"/>
<polygon points="2782.0,879.7 2813.0,908.2 2815.6,921.2 2810.4,934.1 2792.3,941.9 2792.3,967.7 2776.8,944.4 2787.2,923.7 2784.6,903.0" fill="#161616"/>
<polygon points="2536.1,840.9 2549.1,839.6 2549.1,864.2 2543.9,872.0 2537.4,856.5" fill="#161616"/>
<polygon points="2518.0,939.3 2533.5,936.7 2541.3,947.0 2528.4,960.0 2518.0,954.8" fill="#161616"/>
<polygon points="758.3,1370.8 768.4,1340.5 788.6,1333.0 791.1,1297.7 803.7,1310.3 817.6,1312.8 813.8,1338.0 818.8,1348.1 828.9,1335.5 839.0,1334.2 849.1,1330.4 859.2,1330.4 861.7,1338.0 859.2,1350.6 869.2,1360.7 881.9,1358.2 894.5,1363.2 919.7,1360.7 932.3,1373.3 758.3,1373.3" fill="#161616"/>
<polygon points="1200.7,1164.1 1208.3,1154.0 1215.9,1164.1 1217.1,1174.1 1203.3,1174.1" fill="#161616"/>
<polygon points="1358.3,1368.2 1360.9,1345.6 1373.5,1325.4 1381.0,1338.0 1386.1,1358.2 1396.1,1343.0 1403.7,1363.2 1423.9,1360.7 1436.5,1368.2 1454.1,1358.2 1439.0,1378.3 1434.0,1385.9 1416.3,1373.3 1403.7,1385.9 1388.6,1385.9 1373.5,1378.3" fill="#161616"/>
<polygon points="1988.6,1108.6 2003.7,1116.2 2013.8,1131.3 2006.2,1136.3 1993.6,1136.3" fill="#161616"/>
<polygon points="1918.0,1194.3 1943.2,1191.8 1944.5,1212.0 1928.1,1224.6" fill="#161616"/>
<polygon points="1938.2,1262.4 1955.8,1249.8 1976.0,1244.7 1973.5,1257.3 1955.8,1262.4" fill="#161616"/>
<polygon points="1918.0,1406.1 1933.1,1393.5 1950.8,1385.9 1965.9,1401.0 1955.8,1411.9 1918.0,1411.9" fill="#161616"/>
<polygon points="2854.4,1251.3 2862.2,1246.1 2862.2,1261.6 2872.6,1266.8 2898.4,1264.2 2898.4,1282.3 2890.7,1279.7 2867.4,1279.7 2859.6,1277.2" fill="#161616"/>
<polygon points="3084.8,1134.8 3095.1,1133.5 3097.7,1155.5 3092.5,1171.1 3097.7,1189.2 3087.4,1184.0 3087.4,1158.1" fill="#161616"/>
<polygon points="3113.2,1165.9 3123.6,1142.6 3133.9,1145.2 3133.9,1204.7 3123.6,1199.5 3113.2,1181.4" fill="#161616"/>
<polygon points="3102.9,1266.8 3110.7,1261.6 3113.2,1277.2 3105.5,1279.7" fill="#161616"/>
<polygon points="3089.9,1388.4 3102.9,1380.7 3115.8,1383.3 3115.8,1412.0 3087.4,1412.0" fill="#161616"/>
<polygon points="2518.0,1272.0 2528.4,1256.5 2538.7,1253.9 2549.1,1266.8 2549.1,1282.3 2541.3,1290.1 2518.0,1277.2" fill="#161616"/>
<text x="2133" y="578" font-family="Liberation Sans" font-weight="700" font-size="24.5" fill="#9a9a9a" stroke="#0d0d0d" stroke-width="5" paint-order="stroke" stroke-linejoin="round">Mbombela</text>
<text x="2349" y="1160.8" font-family="Liberation Sans" font-weight="700" font-size="28.5" fill="#a0a0a0" stroke="#0d0d0d" stroke-width="5" paint-order="stroke" stroke-linejoin="round">ESWATINI</text>
<text x="717" y="980.3" font-family="Liberation Sans" font-weight="700" font-size="26" fill="#9a9a9a" stroke="#0d0d0d" stroke-width="5" paint-order="stroke" stroke-linejoin="round">nnesburg</text>
<text x="718" y="1236.5" font-family="Liberation Sans" font-weight="700" font-size="26" fill="#9a9a9a" stroke="#0d0d0d" stroke-width="5" paint-order="stroke" stroke-linejoin="round">ing</text>
<line x1="817.7" y1="688.8" x2="2986" y2="797.7" stroke="#3b5fe6" stroke-width="4.5"/>
<line x1="817.7" y1="688.8" x2="2247" y2="1017.3" stroke="#3b5fe6" stroke-width="4.5"/>
<line x1="2986" y1="797.7" x2="2247" y2="1017.3" stroke="#3b5fe6" stroke-width="4.5"/>
<polygon points="1672.0,731.0 1653.6,739.6 1654.5,720.6" fill="#3b5fe6"/>
<polygon points="2410.0,768.6 2391.5,777.2 2392.5,758.2" fill="#3b5fe6"/>
<polygon points="1538.4,853.6 1518.7,858.8 1523.0,840.3" fill="#3b5fe6"/>
<polygon points="2612.5,908.2 2627.1,894.0 2632.5,912.2" fill="#3b5fe6"/>
<circle cx="817.7" cy="688.8" r="14" fill="#5a84ee" stroke="#8a8a8a" stroke-width="2.5"/>
<circle cx="2247" cy="1017.3" r="14" fill="#5a84ee" stroke="#8a8a8a" stroke-width="2.5"/>
<circle cx="2986" cy="797.7" r="14" fill="#5a84ee" stroke="#8a8a8a" stroke-width="2.5"/>
<circle cx="817.7" cy="524.6" r="10" fill="#e05252" stroke="#8a8a8a" stroke-width="2.5"/>
<circle cx="817.7" cy="853.3" r="10" fill="#e05252" stroke="#8a8a8a" stroke-width="2.5"/>
<circle cx="965.4" cy="853.3" r="10" fill="#e05252" stroke="#8a8a8a" stroke-width="2.5"/>
<circle cx="2247" cy="1182.4" r="10" fill="#e05252" stroke="#8a8a8a" stroke-width="2.5"/>
<circle cx="2986" cy="962.8" r="10" fill="#e05252" stroke="#8a8a8a" stroke-width="2.5"/>
<circle cx="867.5" cy="634.2" r="10" fill="#8effff" stroke="#8a8a8a" stroke-width="2.5"/>
<circle cx="2296.4" cy="962.8" r="10" fill="#8effff" stroke="#8a8a8a" stroke-width="2.5"/>
<circle cx="3035.2" cy="743.6" r="10" fill="#8effff" stroke="#8a8a8a" stroke-width="2.5"/>
</svg>
<div class="a" style="left:3028px;top:320px;width:80px;height:224px;background:#182031;border:2px solid #4e5464;border-radius:16px"></div>
<svg class="a" style="left:3054.00px;top:346.00px;color:#e5e7eb" width="32" height="32" viewBox="0 0 24 24" fill="none" stroke="currentColor" stroke-width="2" stroke-linecap="round" stroke-linejoin="round"><path d="m12.83 2.18a2 2 0 0 0-1.66 0L2.6 6.08a1 1 0 0 0 0 1.83l8.58 3.91a2 2 0 0 0 1.66 0l8.58-3.9a1 1 0 0 0 0-1.83Z"/><path d="m22 17.65-9.17 4.16a2 2 0 0 1-1.66 0L2 17.65"/><path d="m22 12.65-9.17 4.16a2 2 0 0 1-1.66 0L2 12.65"/></svg>
<svg class="a" style="left:3054.00px;top:417.40px;color:#e5e7eb" width="32" height="32" viewBox="0 0 24 24" fill="none" stroke="currentColor" stroke-width="2" stroke-linecap="round" stroke-linejoin="round"><circle cx="13.5" cy="6.5" r=".5" fill="currentColor"/><circle cx="17.5" cy="10.5" r=".5" fill="currentColor"/><circle cx="8.5" cy="7.5" r=".5" fill="currentColor"/><circle cx="6.5" cy="12.5" r=".5" fill="currentColor"/><path d="M12 2C6.5 2 2 6.5 2 12s4.5 10 10 10c.926 0 1.648-.746 1.648-1.688 0-.437-.18-.835-.437-1.125-.29-.289-.438-.652-.438-1.125a1.64 1.64 0 0 1 1.668-1.668h1.996c3.051 0 5.555-2.503 5.555-5.554C21.965 6.012 17.461 2 12 2z"/></svg>
<svg class="a" style="left:3054.00px;top:489.50px;color:#e5e7eb" width="32" height="32" viewBox="0 0 24 24" fill="none" stroke="currentColor" stroke-width="2" stroke-linecap="round" stroke-linejoin="round"><path d="M14.5 4h-5L7 7H4a2 2 0 0 0-2 2v9a2 2 0 0 0 2 2h16a2 2 0 0 0 2-2V9a2 2 0 0 0-2-2h-3l-2.5-3z"/><circle cx="12" cy="13" r="3"/></svg>
<div class="a" style="left:1724.5px;top:1265px;width:401px;height:102px;background:#182031;border:2px solid #4e5464;border-radius:16px;box-shadow:0 8px 30px rgba(0,0,0,0.35)"></div>
<div class="a" style="left:1742px;top:1282px;width:72px;height:72px;background:#2e3444;border-radius:12px;"></div>
<svg class="a" style="left:1762.00px;top:1300.50px;color:#5b83f3" width="32" height="32" viewBox="0 0 24 24" fill="none" stroke="currentColor" stroke-width="2" stroke-linecap="round" stroke-linejoin="round"><path d="M4.037 4.688a.495.495 0 0 1 .651-.651l16 6.5a.5.5 0 0 1-.063.947l-6.124 1.58a2 2 0 0 0-1.438 1.435l-1.579 6.126a.5.5 0 0 1-.947.063z"/></svg>
<svg class="a" style="left:1849.70px;top:1300.80px;color:#e5e7eb" width="32" height="32" viewBox="0 0 24 24" fill="none" stroke="currentColor" stroke-width="2" stroke-linecap="round" stroke-linejoin="round"><path d="M7 22a5 5 0 0 1-2-4"/><path d="M3.3 14A6.8 6.8 0 0 1 2 10c0-4.4 4.5-8 10-8s10 3.6 10 8-4.5 8-10 8a12 12 0 0 1-5-1"/><path d="M5 18a2 2 0 1 0 0-4 2 2 0 0 0 0 4z"/></svg>
<svg class="a" style="left:1937.90px;top:1301.00px;color:#e5e7eb" width="32" height="32" viewBox="0 0 24 24" fill="none" stroke="currentColor" stroke-width="2" stroke-linecap="round" stroke-linejoin="round"><path d="M21.3 15.3a2.4 2.4 0 0 1 0 3.4l-2.6 2.6a2.4 2.4 0 0 1-3.4 0L2.7 8.7a2.41 2.41 0 0 1 0-3.4l2.6-2.6a2.41 2.41 0 0 1 3.4 0Z"/><path d="m14.5 12.5 2-2"/><path d="m11.5 9.5 2-2"/><path d="m8.5 6.5 2-2"/><path d="m17.5 15.5 2-2"/></svg>
<div class="a" style="left:2014px;top:1294px;width:2px;height:48px;background:#4e5464;border-radius:0px;"></div>
<div class="a" style="left:2040px;top:1282px;width:68px;height:68px;border:2px solid #4e5464;border-radius:12px"></div>
<svg class="a" style="left:2059.90px;top:1301.00px;color:#e5e7eb" width="32" height="32" viewBox="0 0 24 24" fill="none" stroke="currentColor" stroke-width="2" stroke-linecap="round" stroke-linejoin="round"><circle cx="11" cy="11" r="8"/><path d="m21 21-4.3-4.3"/></svg>
<div class="a" style="left:1030px;top:1322px;width:142px;height:27px;background:#cbcbcb;border:2px solid #3b4252;border-top:none"></div>
<div class="t" style="right:2083.40px;top:1326.37px;font-size:22px;line-height:22px;font-family:'Liberation Sans', sans-serif;font-weight:400;color:#333333;">30 km</div>
<div class="a" style="left:718px;top:1372px;width:479px;height:40px;background:rgba(255,255,255,0.5);border-radius:0px;"></div>
<div class="t" style="left:728.00px;top:1378.86px;font-size:24.5px;line-height:24.5px;font-family:'Liberation Sans', sans-serif;font-weight:400;color:#333333;">© MapTiler © OpenStreetMap contributors</div>
<div class="a" style="left:718px;top:1412px;width:2416px;height:2px;background:#4e5464;border-radius:0px;"></div>
<div class="a" style="left:718px;top:1414px;width:2416px;height:509px;background:#182031;border-radius:0px;"></div>
<div class="a" style="left:726px;top:1424px;width:158px;height:56px;background:#2e3444;border-radius:10px;"></div>
<svg class="a" style="left:753.50px;top:1438.00px;color:#5b83f3" width="28" height="28" viewBox="0 0 24 24" fill="none" stroke="currentColor" stroke-width="2" stroke-linecap="round" stroke-linejoin="round"><polygon points="6 3 20 12 6 21 6 3"/></svg>
<div class="t" style="left:795.20px;top:1437.14px;font-size:27px;line-height:27px;font-family:'Liberation Sans', sans-serif;font-weight:700;color:#e5e7eb;">Jobs</div>
<svg class="a" style="left:911.50px;top:1438.00px;color:#9ca3af" width="28" height="28" viewBox="0 0 24 24" fill="none" stroke="currentColor" stroke-width="2" stroke-linecap="round" stroke-linejoin="round"><polyline points="4 17 10 11 4 5"/><line x1="12" x2="20" y1="19" y2="19"/></svg>
<div class="t" style="left:952.50px;top:1437.14px;font-size:27px;line-height:27px;font-family:'Liberation Sans', sans-serif;font-weight:400;color:#9ca3af;-webkit-text-stroke:0.5px #9ca3af;">Terminal</div>
<svg class="a" style="left:1114.00px;top:1438.00px;color:#9ca3af" width="28" height="28" viewBox="0 0 24 24" fill="none" stroke="currentColor" stroke-width="2" stroke-linecap="round" stroke-linejoin="round"><rect width="8" height="4" x="8" y="2" rx="1" ry="1"/><path d="M16 4h2a2 2 0 0 1 2 2v14a2 2 0 0 1-2 2H6a2 2 0 0 1-2-2V6a2 2 0 0 1 2-2h2"/><path d="M12 11h4"/><path d="M12 16h4"/><path d="M8 11h.01"/><path d="M8 16h.01"/></svg>
<div class="t" style="left:1154.00px;top:1437.14px;font-size:27px;line-height:27px;font-family:'Liberation Sans', sans-serif;font-weight:400;color:#9ca3af;-webkit-text-stroke:0.5px #9ca3af;">Logs</div>
<div class="t" style="left:2703.40px;top:1443.15px;font-size:22px;line-height:22px;font-family:'Liberation Mono', monospace;font-weight:400;color:#9ca3af;">4 jobs   2 completed</div>
<div class="a" style="left:2796.4px;top:1445.5px;width:12px;height:12px;border-radius:50%;background:#a3a8b4"></div>
<svg class="a" style="left:2996.00px;top:1436.00px;color:#a8aebb" width="32" height="32" viewBox="0 0 24 24" fill="none" stroke="currentColor" stroke-width="2" stroke-linecap="round" stroke-linejoin="round"><path d="M3 6h18"/><path d="M19 6v14c0 1-1 2-2 2H7c-1 0-2-1-2-2V6"/><path d="M8 6V4c0-1 1-2 2-2h4c1 0 2 1 2 2v2"/><line x1="10" x2="10" y1="11" y2="17"/><line x1="14" x2="14" y1="11" y2="17"/></svg>
<svg class="a" style="left:3068.00px;top:1436.00px;color:#a8aebb" width="32" height="32" viewBox="0 0 24 24" fill="none" stroke="currentColor" stroke-width="2" stroke-linecap="round" stroke-linejoin="round"><circle cx="12" cy="12" r="1"/><circle cx="12" cy="5" r="1"/><circle cx="12" cy="19" r="1"/></svg>
<div class="a" style="left:718px;top:1490px;width:2416px;height:2px;background:#4e5464;border-radius:0px;"></div>
<div class="t" style="left:907.00px;top:1514.22px;font-size:21px;line-height:21px;font-family:'Liberation Sans', sans-serif;font-weight:700;color:#9ca3af;letter-spacing:2px;">JOB</div>
<div class="t" style="left:1931.00px;top:1514.22px;font-size:21px;line-height:21px;font-family:'Liberation Sans', sans-serif;font-weight:700;color:#9ca3af;letter-spacing:2px;">STATUS</div>
<div class="t" style="left:2382.00px;top:1514.22px;font-size:21px;line-height:21px;font-family:'Liberation Sans', sans-serif;font-weight:700;color:#9ca3af;letter-spacing:2px;">TIME</div>
<div class="a" style="left:718px;top:1556px;width:2416px;height:2px;background:#4e5464;border-radius:0px;"></div>
<div class="a" style="left:742px;top:1590px;width:16px;height:16px;border-radius:50%;background:#f0a03c"></div>
<div class="t" style="left:906.80px;top:1584.79px;font-size:26px;line-height:26px;font-family:'Liberation Sans', sans-serif;font-weight:400;color:#e5e7eb;-webkit-text-stroke:0.5px #e5e7eb;">Import NetCDF: india-from-excel</div>
<div class="a" style="left:1931px;top:1579px;width:114px;height:38px;background:#2a2a30;border-radius:19px;"></div>
<div class="t" style="left:1947.30px;top:1587.52px;font-size:21px;line-height:21px;font-family:'Liberation Sans', sans-serif;font-weight:700;color:#f5a33d;">Running</div>
<div class="t" style="left:2382.00px;top:1588.85px;font-size:22px;line-height:22px;font-family:'Liberation Mono', monospace;font-weight:400;color:#c9cdd4;">3s</div>
<svg class="a" style="left:2980.00px;top:1586.00px;color:#a8aebb" width="24" height="24" viewBox="0 0 24 24" fill="none" stroke="currentColor" stroke-width="2" stroke-linecap="round" stroke-linejoin="round"><circle cx="12" cy="12" r="10"/><path d="m4.9 4.9 14.2 14.2"/></svg>
<div class="a" style="left:718px;top:1638px;width:2416px;height:2px;background:#3a4150;border-radius:0px;"></div>
<div class="a" style="left:742px;top:1672px;width:16px;height:16px;border-radius:50%;background:#4cc764"></div>
<div class="t" style="left:906.80px;top:1666.79px;font-size:26px;line-height:26px;font-family:'Liberation Sans', sans-serif;font-weight:400;color:#e5e7eb;-webkit-text-stroke:0.5px #e5e7eb;">Solve Network: Three Country Electricity Market (Base)</div>
<div class="a" style="left:1931px;top:1661px;width:142px;height:38px;background:#1f2f30;border-radius:19px;"></div>
<div class="t" style="left:1947.30px;top:1669.52px;font-size:21px;line-height:21px;font-family:'Liberation Sans', sans-serif;font-weight:700;color:#4cc764;">Completed</div>
<div class="t" style="left:2382.00px;top:1670.85px;font-size:22px;line-height:22px;font-family:'Liberation Mono', monospace;font-weight:400;color:#c9cdd4;">17s</div>
<svg class="a" style="left:2980.00px;top:1668.00px;color:#a8aebb" width="24" height="24" viewBox="0 0 24 24" fill="none" stroke="currentColor" stroke-width="2" stroke-linecap="round" stroke-linejoin="round"><path d="M3 6h18"/><path d="M19 6v14c0 1-1 2-2 2H7c-1 0-2-1-2-2V6"/><path d="M8 6V4c0-1 1-2 2-2h4c1 0 2 1 2 2v2"/><line x1="10" x2="10" y1="11" y2="17"/><line x1="14" x2="14" y1="11" y2="17"/></svg>
<div class="a" style="left:718px;top:1720px;width:2416px;height:2px;background:#3a4150;border-radius:0px;"></div>
<div class="a" style="left:742px;top:1754px;width:16px;height:16px;border-radius:50%;background:#9ca3af"></div>
<div class="t" style="left:906.80px;top:1748.79px;font-size:26px;line-height:26px;font-family:'Liberation Sans', sans-serif;font-weight:400;color:#e5e7eb;-webkit-text-stroke:0.5px #e5e7eb;">Solve Network: Three Country Electricity Market (Base)</div>
<div class="a" style="left:1931px;top:1743px;width:132px;height:38px;background:#232a3b;border-radius:19px;"></div>
<div class="t" style="left:1947.30px;top:1751.52px;font-size:21px;line-height:21px;font-family:'Liberation Sans', sans-serif;font-weight:700;color:#9ca3af;">Cancelled</div>
<div class="t" style="left:2382.00px;top:1752.85px;font-size:22px;line-height:22px;font-family:'Liberation Mono', monospace;font-weight:400;color:#c9cdd4;">4s</div>
<svg class="a" style="left:2980.00px;top:1750.00px;color:#a8aebb" width="24" height="24" viewBox="0 0 24 24" fill="none" stroke="currentColor" stroke-width="2" stroke-linecap="round" stroke-linejoin="round"><path d="M3 6h18"/><path d="M19 6v14c0 1-1 2-2 2H7c-1 0-2-1-2-2V6"/><path d="M8 6V4c0-1 1-2 2-2h4c1 0 2 1 2 2v2"/><line x1="10" x2="10" y1="11" y2="17"/><line x1="14" x2="14" y1="11" y2="17"/></svg>
<div class="a" style="left:718px;top:1802px;width:2416px;height:2px;background:#3a4150;border-radius:0px;"></div>
<div class="a" style="left:742px;top:1836px;width:16px;height:16px;border-radius:50%;background:#4cc764"></div>
<div class="t" style="left:906.80px;top:1830.79px;font-size:26px;line-height:26px;font-family:'Liberation Sans', sans-serif;font-weight:400;color:#e5e7eb;-webkit-text-stroke:0.5px #e5e7eb;">Solve Network: Three Country Electricity Market (Base)</div>
<div class="a" style="left:1931px;top:1825px;width:142px;height:38px;background:#1f2f30;border-radius:19px;"></div>
<div class="t" style="left:1947.30px;top:1833.52px;font-size:21px;line-height:21px;font-family:'Liberation Sans', sans-serif;font-weight:700;color:#4cc764;">Completed</div>
<div class="t" style="left:2382.00px;top:1834.85px;font-size:22px;line-height:22px;font-family:'Liberation Mono', monospace;font-weight:400;color:#c9cdd4;">1m 1s</div>
<svg class="a" style="left:2980.00px;top:1832.00px;color:#a8aebb" width="24" height="24" viewBox="0 0 24 24" fill="none" stroke="currentColor" stroke-width="2" stroke-linecap="round" stroke-linejoin="round"><path d="M3 6h18"/><path d="M19 6v14c0 1-1 2-2 2H7c-1 0-2-1-2-2V6"/><path d="M8 6V4c0-1 1-2 2-2h4c1 0 2 1 2 2v2"/><line x1="10" x2="10" y1="11" y2="17"/><line x1="14" x2="14" y1="11" y2="17"/></svg>
</div>
<div class="a" style="left:0;top:0;width:3020px;height:1891px;border:2px solid #525867;border-radius:24px;pointer-events:none"></div>
<div class="a" style="left:0;top:0;width:3020px;height:56px;border:2px solid #6a6a6a;border-bottom:none;border-radius:24px 24px 0 0;pointer-events:none"></div>
</div>
</body></html>
